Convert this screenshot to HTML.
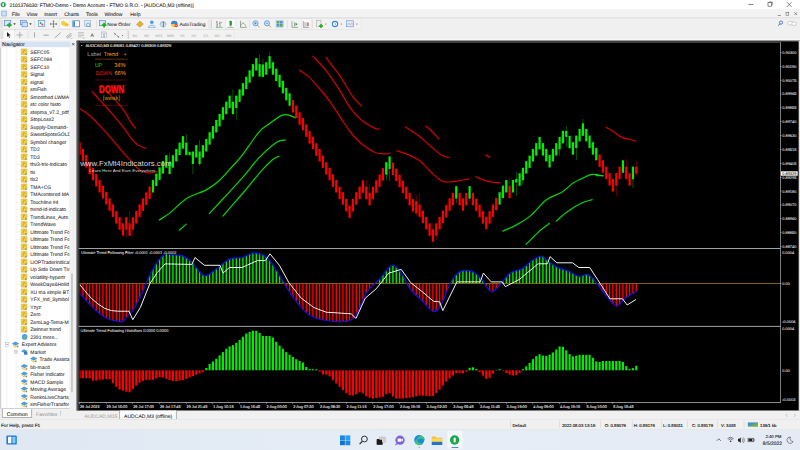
<!DOCTYPE html>
<html><head><meta charset="utf-8"><title>MT4</title><style>html,body{margin:0;padding:0;width:800px;height:450px;overflow:hidden;background:#f0f0f0}</style></head><body>
<svg width="800" height="450" viewBox="0 0 800 450" style="display:block">
<rect x="0" y="0" width="800" height="450" fill="#f0f0f0"/>
<rect x="0" y="0" width="800" height="9.4" fill="#ffffff"/>
<circle cx="3.2" cy="4.6" r="2.6" fill="#2aa05a"/><rect x="2.4" y="2.9" width="1.6" height="3.4" rx="0.8" fill="#fff"/>
<text x="9.49" y="6.6" font-size="4.95" fill="#1a1a1a" text-anchor="start" font-weight="normal" style="font-family:'Liberation Sans', sans-serif" stroke="#1a1a1a" stroke-width="0.07" transform="skewX(0.05)" >2101376030: FTMO-Demo - Demo Account - FTMO S.R.O. - [AUDCAD,M3 (offline)]</text>
<rect x="748.5" y="4.3" width="5" height="0.6" fill="#333"/>
<rect x="768" y="2.6" width="3.6" height="3.6" fill="none" stroke="#333" stroke-width="0.55"/><path d="M769 2 h3.3 v3.3" fill="none" stroke="#333" stroke-width="0.5"/>
<path d="M787 2.2 L791.6 6.8 M791.6 2.2 L787 6.8" stroke="#333" stroke-width="0.6"/>
<rect x="0" y="9.4" width="800" height="7.6" fill="#f3f3f3"/>
<rect x="0" y="17" width="800" height="1.5" fill="#e4e4e4"/>
<rect x="1.8" y="11" width="4.4" height="5" fill="#cfe0f5" stroke="#5b8fd0" stroke-width="0.5"/>
<text x="11.74" y="15.6" font-size="5.05" fill="#222" text-anchor="start" font-weight="normal" style="font-family:'Liberation Sans', sans-serif" stroke="#222" stroke-width="0.07" transform="skewX(0.05)" >File</text>
<text x="26.49" y="15.6" font-size="5.05" fill="#222" text-anchor="start" font-weight="normal" style="font-family:'Liberation Sans', sans-serif" stroke="#222" stroke-width="0.07" transform="skewX(0.05)" >View</text>
<text x="44.19" y="15.6" font-size="5.05" fill="#222" text-anchor="start" font-weight="normal" style="font-family:'Liberation Sans', sans-serif" stroke="#222" stroke-width="0.07" transform="skewX(0.05)" >Insert</text>
<text x="64.19" y="15.6" font-size="5.05" fill="#222" text-anchor="start" font-weight="normal" style="font-family:'Liberation Sans', sans-serif" stroke="#222" stroke-width="0.07" transform="skewX(0.05)" >Charts</text>
<text x="85.99" y="15.6" font-size="5.05" fill="#222" text-anchor="start" font-weight="normal" style="font-family:'Liberation Sans', sans-serif" stroke="#222" stroke-width="0.07" transform="skewX(0.05)" >Tools</text>
<text x="104.39" y="15.6" font-size="5.05" fill="#222" text-anchor="start" font-weight="normal" style="font-family:'Liberation Sans', sans-serif" stroke="#222" stroke-width="0.07" transform="skewX(0.05)" >Window</text>
<text x="130.19" y="15.6" font-size="5.05" fill="#222" text-anchor="start" font-weight="normal" style="font-family:'Liberation Sans', sans-serif" stroke="#222" stroke-width="0.07" transform="skewX(0.05)" >Help</text>
<rect x="777.8" y="15" width="3" height="0.5" fill="#333"/>
<rect x="786" y="12.4" width="2.8" height="2.8" fill="none" stroke="#444" stroke-width="0.45"/>
<path d="M794.3 12.3 L797.1 15.1 M797.1 12.3 L794.3 15.1" stroke="#333" stroke-width="0.5"/>
<rect x="0.5" y="18.6" width="208.2" height="10.599999999999998" fill="#f2f2f2" stroke="#dadada" stroke-width="0.4"/>
<rect x="210" y="18.6" width="24.5" height="10.599999999999998" fill="#f2f2f2" stroke="#dadada" stroke-width="0.4"/>
<rect x="211" y="18.6" width="150" height="10.599999999999998" fill="#f2f2f2" stroke="#dadada" stroke-width="0.4"/>
<rect x="0.5" y="29.8" width="126.5" height="9.999999999999996" fill="#f2f2f2" stroke="#dadada" stroke-width="0.4"/>
<rect x="127.5" y="29.8" width="106.5" height="9.999999999999996" fill="#f2f2f2" stroke="#dadada" stroke-width="0.4"/>
<rect x="1.6" y="20" width="0.8" height="8" fill="#c8c8c8"/>
<rect x="211.2" y="20" width="0.8" height="8" fill="#c8c8c8"/>
<rect x="1.6" y="31" width="0.8" height="8" fill="#c8c8c8"/>
<rect x="128.3" y="31" width="0.8" height="8" fill="#c8c8c8"/>
<rect x="34.5" y="20" width="0.5" height="8" fill="#cfcfcf"/>
<rect x="96" y="20" width="0.5" height="8" fill="#cfcfcf"/>
<rect x="249.6" y="20" width="0.5" height="8" fill="#cfcfcf"/>
<rect x="287" y="20" width="0.5" height="8" fill="#cfcfcf"/>
<rect x="312" y="20" width="0.5" height="8" fill="#cfcfcf"/>
<rect x="27.7" y="31" width="0.5" height="8" fill="#cfcfcf"/>
<rect x="4.6" y="20.6" width="6.2" height="5.2" fill="#d9e8f8" stroke="#3f7fcf" stroke-width="0.6"/>
<path d="M9.3 22.8 v4.6 M7.0 25.1 h4.6" stroke="#18b018" stroke-width="1.6"/>
<path d="M13.6 23.6 h1.8 l-0.9 1.2 z" fill="#222" stroke="#222" stroke-width="0.3"/>
<rect x="20.6" y="20.4" width="5.6" height="4.4" fill="#d9e8f8" stroke="#3f7fcf" stroke-width="0.6"/><rect x="22" y="22.2" width="5.6" height="4.6" fill="#d0e2f6" stroke="#3f7fcf" stroke-width="0.6"/>
<path d="M29.6 23.6 h1.8 l-0.9 1.2 z" fill="#222" stroke="#222" stroke-width="0.3"/>
<rect x="38.4" y="20.6" width="6.4" height="6" fill="#e8f1fb" stroke="#4a8ad6" stroke-width="0.6"/><circle cx="40.6" cy="23" r="0.9" fill="#2aa02a"/><circle cx="42.4" cy="24.6" r="1" fill="#e04a2a"/>
<path d="M53.5 20.6 v6.8 M50.1 24 h6.8" stroke="#555" stroke-width="0.6"/><path d="M53.5 20.4 l-1 1.2 h2 z M53.5 27.6 l-1 -1.2 h2 z M49.9 24 l1.2 -1 v2 z M57.1 24 l-1.2 -1 v2 z" fill="#555"/>
<rect x="59.8" y="18.9" width="9.8" height="10" fill="#fbfbfb" stroke="#d6d6d6" stroke-width="0.35"/>
<path d="M61 21.4 l3 -0.6 l2.2 2.2 l-1.2 3 l-3.6 -1 z" fill="#f2cf45"/><path d="M64.3 23.4 l1.6 0.3 l0.8 -1.4 l0.8 1.4 l1.6 0.3 l-1.1 1.2 l0.3 1.6 l-1.6 -0.7 l-1.5 0.8 l0.2 -1.6 z" fill="#f0c020"/>
<rect x="72.8" y="20.8" width="6.6" height="6" fill="#ffffff" stroke="#3a7bd0" stroke-width="0.7"/><rect x="73.3" y="21.3" width="1.6" height="5" fill="#3a7bd0"/>
<rect x="84.8" y="20.6" width="5.8" height="6" fill="#e6eef8" stroke="#7a9cc8" stroke-width="0.5"/><circle cx="88.2" cy="24.8" r="1.8" fill="none" stroke="#3a7bd0" stroke-width="0.6"/><path d="M89.4 26 l1.8 1.6" stroke="#d8a020" stroke-width="0.8"/>
<rect x="99.4" y="20.6" width="6.2" height="5.2" fill="#d9e8f8" stroke="#3f7fcf" stroke-width="0.6"/>
<path d="M104.10000000000001 22.8 v4.6 M101.80000000000001 25.1 h4.6" stroke="#18b018" stroke-width="1.6"/>
<text x="107.28" y="25.8" font-size="4.8" fill="#222" text-anchor="start" font-weight="normal" style="font-family:'Liberation Sans', sans-serif" stroke="#222" stroke-width="0.07" transform="skewX(0.05)" >New Order</text>
<path d="M136.5 24.5 l3.5 -3.5 l3.4 3 l-3.4 3.2 z" fill="#e8b030" stroke="#a8781a" stroke-width="0.4"/>
<circle cx="151.8" cy="22.3" r="1.8" fill="#4a9ae6"/><path d="M148.3 27.4 c0 -3 7 -3 7 0 z" fill="#4a9ae6" stroke="#2a6ab6" stroke-width="0.3"/><ellipse cx="151.8" cy="26.6" rx="3.3" ry="1" fill="#e8eef6" stroke="#9ab" stroke-width="0.3"/>
<path d="M160 24.6 a3 3 0 0 1 6 0" fill="none" stroke="#88a8c8" stroke-width="0.7"/><circle cx="163" cy="24.4" r="2.6" fill="#cfe3f0" stroke="#6a9ac0" stroke-width="0.4"/><path d="M163.4 21.6 v5.6" stroke="#2a9a3a" stroke-width="0.9"/>
<circle cx="174.2" cy="24" r="3.3" fill="#f6c84a"/><path d="M170.9 24 a3.3 3.3 0 0 1 6.6 0 z" fill="#3a8ad0"/><circle cx="176.2" cy="25.6" r="1.7" fill="#e03030"/><rect x="175.3" y="25.3" width="1.8" height="0.6" fill="#fff"/>
<text x="179.38" y="25.8" font-size="4.8" fill="#222" text-anchor="start" font-weight="normal" style="font-family:'Liberation Sans', sans-serif" stroke="#222" stroke-width="0.07" transform="skewX(0.05)" >AutoTrading</text>
<path d="M217 21 v6.5 M216 22 h1 M217 25 h1 M220 21.5 v5.5 M219 23.5 h1 M221 22.5 h1" stroke="#444" stroke-width="0.5"/><path d="M215.8 27.4 h7" stroke="#2a9a2a" stroke-width="0.5"/>
<rect x="225.6" y="18.9" width="10" height="10" fill="#fbfbfb" stroke="#d6d6d6" stroke-width="0.35"/>
<rect x="229.8" y="21.2" width="2" height="4" fill="#2ab02a" stroke="#137a13" stroke-width="0.3"/><path d="M230.8 20.2 v6.8" stroke="#137a13" stroke-width="0.4"/><path d="M227 27.4 h7" stroke="#555" stroke-width="0.4"/>
<path d="M240.5 20.8 v6.6 h6.2" fill="none" stroke="#555" stroke-width="0.5"/><path d="M241 25.5 c1.5 -4 3 -3 5 1" fill="none" stroke="#2a9a2a" stroke-width="0.6"/>
<circle cx="255.5" cy="23.3" r="2.6" fill="#cfe6fb" stroke="#3a86d6" stroke-width="0.7"/><path d="M257.3 25.1 l2.2 2.2" stroke="#d8a020" stroke-width="1"/><path d="M254.2 23.3 h2.6" stroke="#2a70c0" stroke-width="0.6"/>
<path d="M255.5 22 v2.6" stroke="#2a70c0" stroke-width="0.6"/>
<circle cx="267" cy="23.3" r="2.6" fill="#cfe6fb" stroke="#3a86d6" stroke-width="0.7"/><path d="M268.8 25.1 l2.2 2.2" stroke="#d8a020" stroke-width="1"/><path d="M265.7 23.3 h2.6" stroke="#2a70c0" stroke-width="0.6"/>
<rect x="276" y="20.4" width="7.2" height="6.9" fill="#fff" stroke="#8aaed8" stroke-width="0.4"/><rect x="276.5" y="20.9" width="3" height="2.8" fill="#5aaa5a"/><rect x="279.8" y="20.9" width="3" height="2.8" fill="#5a90d8"/><rect x="276.5" y="24" width="3" height="2.8" fill="#5a90d8"/><rect x="279.8" y="24" width="3" height="2.8" fill="#5aaa5a"/>
<path d="M292 21 v6.4 h6 M294.5 22.5 v4" fill="none" stroke="#555" stroke-width="0.5"/><path d="M295.5 22.6 l2.2 1.6 l-2.2 1.6 z" fill="#2aa02a"/>
<rect x="301.4" y="18.9" width="9.8" height="10" fill="#fbfbfb" stroke="#d6d6d6" stroke-width="0.35"/>
<path d="M303.3 21 v6.4 h6 M305 22 v4.5 M307 22.5 v4" fill="none" stroke="#555" stroke-width="0.5"/><path d="M308 22.5 v3.5" stroke="#e02020" stroke-width="1"/>
<rect x="316.2" y="20.4" width="4.8" height="6" fill="#eee" stroke="#888" stroke-width="0.4"/><path d="M321 24 v4 M319 26 h4" stroke="#18b018" stroke-width="1.5"/><path d="M325.2 23.8 l1.4 0 l-0.7 0.9 z" fill="#333"/>
<circle cx="335" cy="24" r="3.2" fill="#3a86d6"/><circle cx="335" cy="24" r="2.1" fill="#fff"/><path d="M335 22.6 v1.4 l1 0.7" stroke="#333" stroke-width="0.4" fill="none"/><path d="M340.6 23.8 l1.4 0 l-0.7 0.9 z" fill="#333"/>
<rect x="346.6" y="20.8" width="7" height="6" fill="#dfeafa" stroke="#4a80c8" stroke-width="0.5"/><path d="M347.4 24.5 l1.5 -1 l1.5 1 l1.5 -1 l1.5 1" stroke="#e04040" stroke-width="0.4" fill="none"/><path d="M356.2 23.8 l1.4 0 l-0.7 0.9 z" fill="#333"/>
<circle cx="781" cy="22.6" r="1.6" fill="none" stroke="#2a6ad6" stroke-width="0.8"/><path d="M779.9 23.8 l-1.6 1.8" stroke="#2a6ad6" stroke-width="1"/>
<ellipse cx="790.5" cy="23.2" rx="2.6" ry="1.9" fill="#fff" stroke="#999" stroke-width="0.45"/><ellipse cx="794" cy="23.8" rx="2.4" ry="1.7" fill="#fff" stroke="#999" stroke-width="0.45"/>
<rect x="3.7" y="30" width="10.5" height="9.6" fill="#fbfbfb" stroke="#dedede" stroke-width="0.3"/>
<path d="M7 32 l0 5 l1.2 -1.2 l1 2 l0.8 -0.4 l-1 -2 l1.7 0 z" fill="#222"/>
<path d="M19.8 31.8 v6.4 M16.6 35 h6.4" stroke="#777" stroke-width="0.5"/>
<path d="M34.5 32.4 v5" stroke="#666" stroke-width="0.55"/>
<path d="M43.5 35.2 h5.2" stroke="#666" stroke-width="0.55"/>
<path d="M54.7 38 l6 -5.4" stroke="#666" stroke-width="0.55"/>
<path d="M66 37 l5 -4 M66.6 38 l5 -4 M67.6 38.6 l4 -3" stroke="#888" stroke-width="0.55"/><text x="71" y="39" font-size="2.5" fill="#444" style="font-family:Liberation Sans">F</text>
<path d="M78 32.5 h6 M78 34 h6 M78 35.5 h6 M78 37 h4" stroke="#999" stroke-width="0.45"/><path d="M82.5 37.5 l1.2 1.2 l1.2 -1.2" fill="none" stroke="#666" stroke-width="0.4"/>
<text x="90.57" y="37.2" font-size="5" fill="#444" text-anchor="start" font-weight="normal" style="font-family:'Liberation Sans', sans-serif" stroke="#444" stroke-width="0.07" transform="skewX(0.05)" >A</text>
<rect x="101.6" y="32" width="5.2" height="5.6" fill="#f4f4f4" stroke="#888" stroke-width="0.4"/><text x="102.57" y="37" font-size="4.8" fill="#444" text-anchor="start" font-weight="normal" style="font-family:'Liberation Sans', sans-serif" stroke="#444" stroke-width="0.07" transform="skewX(0.05)" >T</text>
<path d="M113.8 33 l2 1 l-1 1.2 M116.6 35.6 l2.4 1.2 l-1 1" fill="none" stroke="#444" stroke-width="0.6"/><path d="M121.8 35 l1.5 0 l-0.75 0.9 z" fill="#333"/>
<text x="132.47" y="36.6" font-size="3.6" fill="#b4b4b4" text-anchor="start" font-weight="normal" style="font-family:'Liberation Sans', sans-serif" stroke="#b4b4b4" stroke-width="0.07" transform="skewX(0.05)" >M1</text>
<text x="144.27" y="36.6" font-size="3.6" fill="#b4b4b4" text-anchor="start" font-weight="normal" style="font-family:'Liberation Sans', sans-serif" stroke="#b4b4b4" stroke-width="0.07" transform="skewX(0.05)" >M5</text>
<text x="155.37" y="36.6" font-size="3.6" fill="#b4b4b4" text-anchor="start" font-weight="normal" style="font-family:'Liberation Sans', sans-serif" stroke="#b4b4b4" stroke-width="0.07" transform="skewX(0.05)" >M15</text>
<text x="166.97" y="36.6" font-size="3.6" fill="#b4b4b4" text-anchor="start" font-weight="normal" style="font-family:'Liberation Sans', sans-serif" stroke="#b4b4b4" stroke-width="0.07" transform="skewX(0.05)" >M30</text>
<text x="180.17" y="36.6" font-size="3.6" fill="#b4b4b4" text-anchor="start" font-weight="normal" style="font-family:'Liberation Sans', sans-serif" stroke="#b4b4b4" stroke-width="0.07" transform="skewX(0.05)" >H1</text>
<text x="191.47" y="36.6" font-size="3.6" fill="#b4b4b4" text-anchor="start" font-weight="normal" style="font-family:'Liberation Sans', sans-serif" stroke="#b4b4b4" stroke-width="0.07" transform="skewX(0.05)" >H4</text>
<text x="203.57" y="36.6" font-size="3.6" fill="#b4b4b4" text-anchor="start" font-weight="normal" style="font-family:'Liberation Sans', sans-serif" stroke="#b4b4b4" stroke-width="0.07" transform="skewX(0.05)" >D1</text>
<text x="214.57" y="36.6" font-size="3.6" fill="#b4b4b4" text-anchor="start" font-weight="normal" style="font-family:'Liberation Sans', sans-serif" stroke="#b4b4b4" stroke-width="0.07" transform="skewX(0.05)" >W1</text>
<text x="225.77" y="36.6" font-size="3.6" fill="#b4b4b4" text-anchor="start" font-weight="normal" style="font-family:'Liberation Sans', sans-serif" stroke="#b4b4b4" stroke-width="0.07" transform="skewX(0.05)" >MN</text>
<rect x="0" y="40.2" width="78" height="370" fill="#f0f0f0"/>
<rect x="0.8" y="41.6" width="69.6" height="5.4" fill="#d5e3f3"/>
<text x="2.06" y="46.1" font-size="5.3" fill="#1a2a3a" text-anchor="start" font-weight="normal" style="font-family:'Liberation Sans', sans-serif" stroke="#1a2a3a" stroke-width="0.07" transform="skewX(0.05)" >Navigator</text>
<path d="M72.2 43 l2.2 2.4 M74.4 43 l-2.2 2.4" stroke="#222" stroke-width="0.6"/>
<rect x="1" y="47.5" width="68.4" height="361" fill="#ffffff"/>
<rect x="69.4" y="47.5" width="7" height="361" fill="#f0f0f0"/>
<rect x="71.1" y="273.3" width="1.7" height="119" fill="#c4c4c4" rx="0.5"/>
<rect x="0.6" y="47.5" width="0.5" height="361" fill="#a0a0a0"/>
<clipPath id="navclip"><rect x="1" y="47.5" width="68.4" height="361"/></clipPath>
<g clip-path="url(#navclip)">
<path d="M6.9 47.5 V408" stroke="#c8c8c8" stroke-width="0.4" stroke-dasharray="0.5 0.5"/>
<path d="M16.1 47.5 V340" stroke="#c8c8c8" stroke-width="0.4" stroke-dasharray="0.5 0.5"/>
<path d="M16.1 355 V408" stroke="#c8c8c8" stroke-width="0.4" stroke-dasharray="0.5 0.5"/>
<path d="M25 355 V359.4 H30" stroke="#c8c8c8" stroke-width="0.4" fill="none" stroke-dasharray="0.5 0.5"/>
<path d="M16.4 51.9 H20.5" stroke="#c8c8c8" stroke-width="0.4" stroke-dasharray="0.5 0.5"/>
<rect x="21.2" y="48.9" width="5.8" height="5.8" fill="#f3d24a" stroke="#caa22a" stroke-width="0.45" rx="0.6"/><path d="M22.8 53.699999999999996 l1.2 -4 l1.6 1.8" fill="none" stroke="#8a6a10" stroke-width="0.4"/><circle cx="25.799999999999997" cy="53.9" r="1" fill="#9a9a9a"/>
<text x="30.25" y="53.699999999999996" font-size="5.0" fill="#1a1a1a" text-anchor="start" font-weight="normal" style="font-family:'Liberation Sans', sans-serif" stroke="#1a1a1a" stroke-width="0.04" transform="skewX(0.05)" >SEFC05</text>
<path d="M16.4 59.4 H20.5" stroke="#c8c8c8" stroke-width="0.4" stroke-dasharray="0.5 0.5"/>
<rect x="21.2" y="56.4" width="5.8" height="5.8" fill="#f3d24a" stroke="#caa22a" stroke-width="0.45" rx="0.6"/><path d="M22.8 61.199999999999996 l1.2 -4 l1.6 1.8" fill="none" stroke="#8a6a10" stroke-width="0.4"/><circle cx="25.799999999999997" cy="61.4" r="1" fill="#9a9a9a"/>
<text x="30.25" y="61.199999999999996" font-size="5.0" fill="#1a1a1a" text-anchor="start" font-weight="normal" style="font-family:'Liberation Sans', sans-serif" stroke="#1a1a1a" stroke-width="0.04" transform="skewX(0.05)" >SEFC084</text>
<path d="M16.4 66.9 H20.5" stroke="#c8c8c8" stroke-width="0.4" stroke-dasharray="0.5 0.5"/>
<rect x="21.2" y="63.900000000000006" width="5.8" height="5.8" fill="#f3d24a" stroke="#caa22a" stroke-width="0.45" rx="0.6"/><path d="M22.8 68.7 l1.2 -4 l1.6 1.8" fill="none" stroke="#8a6a10" stroke-width="0.4"/><circle cx="25.799999999999997" cy="68.9" r="1" fill="#9a9a9a"/>
<text x="30.24" y="68.7" font-size="5.0" fill="#1a1a1a" text-anchor="start" font-weight="normal" style="font-family:'Liberation Sans', sans-serif" stroke="#1a1a1a" stroke-width="0.04" transform="skewX(0.05)" >SEFC10</text>
<path d="M16.4 74.4 H20.5" stroke="#c8c8c8" stroke-width="0.4" stroke-dasharray="0.5 0.5"/>
<rect x="21.2" y="71.4" width="5.8" height="5.8" fill="#f3d24a" stroke="#caa22a" stroke-width="0.45" rx="0.6"/><path d="M22.8 76.2 l1.2 -4 l1.6 1.8" fill="none" stroke="#8a6a10" stroke-width="0.4"/><circle cx="25.799999999999997" cy="76.4" r="1" fill="#9a9a9a"/>
<text x="30.23" y="76.2" font-size="5.0" fill="#1a1a1a" text-anchor="start" font-weight="normal" style="font-family:'Liberation Sans', sans-serif" stroke="#1a1a1a" stroke-width="0.04" transform="skewX(0.05)" >Signal</text>
<path d="M16.4 81.9 H20.5" stroke="#c8c8c8" stroke-width="0.4" stroke-dasharray="0.5 0.5"/>
<rect x="21.2" y="78.9" width="5.8" height="5.8" fill="#f3d24a" stroke="#caa22a" stroke-width="0.45" rx="0.6"/><path d="M22.8 83.7 l1.2 -4 l1.6 1.8" fill="none" stroke="#8a6a10" stroke-width="0.4"/><circle cx="25.799999999999997" cy="83.9" r="1" fill="#9a9a9a"/>
<text x="30.23" y="83.7" font-size="5.0" fill="#1a1a1a" text-anchor="start" font-weight="normal" style="font-family:'Liberation Sans', sans-serif" stroke="#1a1a1a" stroke-width="0.04" transform="skewX(0.05)" >signal</text>
<path d="M16.4 89.4 H20.5" stroke="#c8c8c8" stroke-width="0.4" stroke-dasharray="0.5 0.5"/>
<rect x="21.2" y="86.4" width="5.8" height="5.8" fill="#f3d24a" stroke="#caa22a" stroke-width="0.45" rx="0.6"/><path d="M22.8 91.2 l1.2 -4 l1.6 1.8" fill="none" stroke="#8a6a10" stroke-width="0.4"/><circle cx="25.799999999999997" cy="91.4" r="1" fill="#9a9a9a"/>
<text x="30.22" y="91.2" font-size="5.0" fill="#1a1a1a" text-anchor="start" font-weight="normal" style="font-family:'Liberation Sans', sans-serif" stroke="#1a1a1a" stroke-width="0.04" transform="skewX(0.05)" >smFish</text>
<path d="M16.4 96.9 H20.5" stroke="#c8c8c8" stroke-width="0.4" stroke-dasharray="0.5 0.5"/>
<rect x="21.2" y="93.9" width="5.8" height="5.8" fill="#f3d24a" stroke="#caa22a" stroke-width="0.45" rx="0.6"/><path d="M22.8 98.7 l1.2 -4 l1.6 1.8" fill="none" stroke="#8a6a10" stroke-width="0.4"/><circle cx="25.799999999999997" cy="98.9" r="1" fill="#9a9a9a"/>
<text x="30.21" y="98.7" font-size="5.0" fill="#1a1a1a" text-anchor="start" font-weight="normal" style="font-family:'Liberation Sans', sans-serif" stroke="#1a1a1a" stroke-width="0.04" transform="skewX(0.05)" >Smoothed LWMA</text>
<path d="M16.4 104.4 H20.5" stroke="#c8c8c8" stroke-width="0.4" stroke-dasharray="0.5 0.5"/>
<rect x="21.2" y="101.4" width="5.8" height="5.8" fill="#f3d24a" stroke="#caa22a" stroke-width="0.45" rx="0.6"/><path d="M22.8 106.2 l1.2 -4 l1.6 1.8" fill="none" stroke="#8a6a10" stroke-width="0.4"/><circle cx="25.799999999999997" cy="106.4" r="1" fill="#9a9a9a"/>
<text x="30.21" y="106.2" font-size="5.0" fill="#1a1a1a" text-anchor="start" font-weight="normal" style="font-family:'Liberation Sans', sans-serif" stroke="#1a1a1a" stroke-width="0.04" transform="skewX(0.05)" >stc color histo</text>
<path d="M16.4 111.9 H20.5" stroke="#c8c8c8" stroke-width="0.4" stroke-dasharray="0.5 0.5"/>
<rect x="21.2" y="108.9" width="5.8" height="5.8" fill="#f3d24a" stroke="#caa22a" stroke-width="0.45" rx="0.6"/><path d="M22.8 113.7 l1.2 -4 l1.6 1.8" fill="none" stroke="#8a6a10" stroke-width="0.4"/><circle cx="25.799999999999997" cy="113.9" r="1" fill="#9a9a9a"/>
<text x="30.20" y="113.7" font-size="5.0" fill="#1a1a1a" text-anchor="start" font-weight="normal" style="font-family:'Liberation Sans', sans-serif" stroke="#1a1a1a" stroke-width="0.04" transform="skewX(0.05)" >stepma_v7.2_pdf_</text>
<path d="M16.4 119.4 H20.5" stroke="#c8c8c8" stroke-width="0.4" stroke-dasharray="0.5 0.5"/>
<rect x="21.2" y="116.4" width="5.8" height="5.8" fill="#f3d24a" stroke="#caa22a" stroke-width="0.45" rx="0.6"/><path d="M22.8 121.2 l1.2 -4 l1.6 1.8" fill="none" stroke="#8a6a10" stroke-width="0.4"/><circle cx="25.799999999999997" cy="121.4" r="1" fill="#9a9a9a"/>
<text x="30.19" y="121.2" font-size="5.0" fill="#1a1a1a" text-anchor="start" font-weight="normal" style="font-family:'Liberation Sans', sans-serif" stroke="#1a1a1a" stroke-width="0.04" transform="skewX(0.05)" >StopLoss2</text>
<path d="M16.4 126.9 H20.5" stroke="#c8c8c8" stroke-width="0.4" stroke-dasharray="0.5 0.5"/>
<rect x="21.2" y="123.9" width="5.8" height="5.8" fill="#f3d24a" stroke="#caa22a" stroke-width="0.45" rx="0.6"/><path d="M22.8 128.70000000000002 l1.2 -4 l1.6 1.8" fill="none" stroke="#8a6a10" stroke-width="0.4"/><circle cx="25.799999999999997" cy="128.9" r="1" fill="#9a9a9a"/>
<text x="30.19" y="128.70000000000002" font-size="5.0" fill="#1a1a1a" text-anchor="start" font-weight="normal" style="font-family:'Liberation Sans', sans-serif" stroke="#1a1a1a" stroke-width="0.04" transform="skewX(0.05)" >Supply-Demand-</text>
<path d="M16.4 134.4 H20.5" stroke="#c8c8c8" stroke-width="0.4" stroke-dasharray="0.5 0.5"/>
<rect x="21.2" y="131.4" width="5.8" height="5.8" fill="#f3d24a" stroke="#caa22a" stroke-width="0.45" rx="0.6"/><path d="M22.8 136.20000000000002 l1.2 -4 l1.6 1.8" fill="none" stroke="#8a6a10" stroke-width="0.4"/><circle cx="25.799999999999997" cy="136.4" r="1" fill="#9a9a9a"/>
<text x="30.18" y="136.20000000000002" font-size="5.0" fill="#1a1a1a" text-anchor="start" font-weight="normal" style="font-family:'Liberation Sans', sans-serif" stroke="#1a1a1a" stroke-width="0.04" transform="skewX(0.05)" >SweetSpotsGOLD</text>
<path d="M16.4 141.9 H20.5" stroke="#c8c8c8" stroke-width="0.4" stroke-dasharray="0.5 0.5"/>
<rect x="21.2" y="138.9" width="5.8" height="5.8" fill="#f3d24a" stroke="#caa22a" stroke-width="0.45" rx="0.6"/><path d="M22.8 143.70000000000002 l1.2 -4 l1.6 1.8" fill="none" stroke="#8a6a10" stroke-width="0.4"/><circle cx="25.799999999999997" cy="143.9" r="1" fill="#9a9a9a"/>
<text x="30.17" y="143.70000000000002" font-size="5.0" fill="#1a1a1a" text-anchor="start" font-weight="normal" style="font-family:'Liberation Sans', sans-serif" stroke="#1a1a1a" stroke-width="0.04" transform="skewX(0.05)" >Symbol changer</text>
<path d="M16.4 149.4 H20.5" stroke="#c8c8c8" stroke-width="0.4" stroke-dasharray="0.5 0.5"/>
<rect x="21.2" y="146.4" width="5.8" height="5.8" fill="#f3d24a" stroke="#caa22a" stroke-width="0.45" rx="0.6"/><path d="M22.8 151.20000000000002 l1.2 -4 l1.6 1.8" fill="none" stroke="#8a6a10" stroke-width="0.4"/><circle cx="25.799999999999997" cy="151.4" r="1" fill="#9a9a9a"/>
<text x="30.17" y="151.20000000000002" font-size="5.0" fill="#1a1a1a" text-anchor="start" font-weight="normal" style="font-family:'Liberation Sans', sans-serif" stroke="#1a1a1a" stroke-width="0.04" transform="skewX(0.05)" >TD2</text>
<path d="M16.4 156.9 H20.5" stroke="#c8c8c8" stroke-width="0.4" stroke-dasharray="0.5 0.5"/>
<rect x="21.2" y="153.9" width="5.8" height="5.8" fill="#f3d24a" stroke="#caa22a" stroke-width="0.45" rx="0.6"/><path d="M22.8 158.70000000000002 l1.2 -4 l1.6 1.8" fill="none" stroke="#8a6a10" stroke-width="0.4"/><circle cx="25.799999999999997" cy="158.9" r="1" fill="#9a9a9a"/>
<text x="30.16" y="158.70000000000002" font-size="5.0" fill="#1a1a1a" text-anchor="start" font-weight="normal" style="font-family:'Liberation Sans', sans-serif" stroke="#1a1a1a" stroke-width="0.04" transform="skewX(0.05)" >TD3</text>
<path d="M16.4 164.4 H20.5" stroke="#c8c8c8" stroke-width="0.4" stroke-dasharray="0.5 0.5"/>
<rect x="21.2" y="161.4" width="5.8" height="5.8" fill="#f3d24a" stroke="#caa22a" stroke-width="0.45" rx="0.6"/><path d="M22.8 166.20000000000002 l1.2 -4 l1.6 1.8" fill="none" stroke="#8a6a10" stroke-width="0.4"/><circle cx="25.799999999999997" cy="166.4" r="1" fill="#9a9a9a"/>
<text x="30.15" y="166.20000000000002" font-size="5.0" fill="#1a1a1a" text-anchor="start" font-weight="normal" style="font-family:'Liberation Sans', sans-serif" stroke="#1a1a1a" stroke-width="0.04" transform="skewX(0.05)" >thv3-trix-indicato</text>
<path d="M16.4 171.9 H20.5" stroke="#c8c8c8" stroke-width="0.4" stroke-dasharray="0.5 0.5"/>
<rect x="21.2" y="168.9" width="5.8" height="5.8" fill="#f3d24a" stroke="#caa22a" stroke-width="0.45" rx="0.6"/><path d="M22.8 173.70000000000002 l1.2 -4 l1.6 1.8" fill="none" stroke="#8a6a10" stroke-width="0.4"/><circle cx="25.799999999999997" cy="173.9" r="1" fill="#9a9a9a"/>
<text x="30.15" y="173.70000000000002" font-size="5.0" fill="#1a1a1a" text-anchor="start" font-weight="normal" style="font-family:'Liberation Sans', sans-serif" stroke="#1a1a1a" stroke-width="0.04" transform="skewX(0.05)" >tix</text>
<path d="M16.4 179.4 H20.5" stroke="#c8c8c8" stroke-width="0.4" stroke-dasharray="0.5 0.5"/>
<rect x="21.2" y="176.4" width="5.8" height="5.8" fill="#f3d24a" stroke="#caa22a" stroke-width="0.45" rx="0.6"/><path d="M22.8 181.20000000000002 l1.2 -4 l1.6 1.8" fill="none" stroke="#8a6a10" stroke-width="0.4"/><circle cx="25.799999999999997" cy="181.4" r="1" fill="#9a9a9a"/>
<text x="30.14" y="181.20000000000002" font-size="5.0" fill="#1a1a1a" text-anchor="start" font-weight="normal" style="font-family:'Liberation Sans', sans-serif" stroke="#1a1a1a" stroke-width="0.04" transform="skewX(0.05)" >tix2</text>
<path d="M16.4 186.9 H20.5" stroke="#c8c8c8" stroke-width="0.4" stroke-dasharray="0.5 0.5"/>
<rect x="21.2" y="183.9" width="5.8" height="5.8" fill="#f3d24a" stroke="#caa22a" stroke-width="0.45" rx="0.6"/><path d="M22.8 188.70000000000002 l1.2 -4 l1.6 1.8" fill="none" stroke="#8a6a10" stroke-width="0.4"/><circle cx="25.799999999999997" cy="188.9" r="1" fill="#9a9a9a"/>
<text x="30.14" y="188.70000000000002" font-size="5.0" fill="#1a1a1a" text-anchor="start" font-weight="normal" style="font-family:'Liberation Sans', sans-serif" stroke="#1a1a1a" stroke-width="0.04" transform="skewX(0.05)" >TMA+CG</text>
<path d="M16.4 194.4 H20.5" stroke="#c8c8c8" stroke-width="0.4" stroke-dasharray="0.5 0.5"/>
<rect x="21.2" y="191.4" width="5.8" height="5.8" fill="#f3d24a" stroke="#caa22a" stroke-width="0.45" rx="0.6"/><path d="M22.8 196.20000000000002 l1.2 -4 l1.6 1.8" fill="none" stroke="#8a6a10" stroke-width="0.4"/><circle cx="25.799999999999997" cy="196.4" r="1" fill="#9a9a9a"/>
<text x="30.13" y="196.20000000000002" font-size="5.0" fill="#1a1a1a" text-anchor="start" font-weight="normal" style="font-family:'Liberation Sans', sans-serif" stroke="#1a1a1a" stroke-width="0.04" transform="skewX(0.05)" >TMAcentered MA</text>
<path d="M16.4 201.9 H20.5" stroke="#c8c8c8" stroke-width="0.4" stroke-dasharray="0.5 0.5"/>
<rect x="21.2" y="198.9" width="5.8" height="5.8" fill="#f3d24a" stroke="#caa22a" stroke-width="0.45" rx="0.6"/><path d="M22.8 203.70000000000002 l1.2 -4 l1.6 1.8" fill="none" stroke="#8a6a10" stroke-width="0.4"/><circle cx="25.799999999999997" cy="203.9" r="1" fill="#9a9a9a"/>
<text x="30.12" y="203.70000000000002" font-size="5.0" fill="#1a1a1a" text-anchor="start" font-weight="normal" style="font-family:'Liberation Sans', sans-serif" stroke="#1a1a1a" stroke-width="0.04" transform="skewX(0.05)" >Touchline #4</text>
<path d="M16.4 209.4 H20.5" stroke="#c8c8c8" stroke-width="0.4" stroke-dasharray="0.5 0.5"/>
<rect x="21.2" y="206.4" width="5.8" height="5.8" fill="#f3d24a" stroke="#caa22a" stroke-width="0.45" rx="0.6"/><path d="M22.8 211.20000000000002 l1.2 -4 l1.6 1.8" fill="none" stroke="#8a6a10" stroke-width="0.4"/><circle cx="25.799999999999997" cy="211.4" r="1" fill="#9a9a9a"/>
<text x="30.12" y="211.20000000000002" font-size="5.0" fill="#1a1a1a" text-anchor="start" font-weight="normal" style="font-family:'Liberation Sans', sans-serif" stroke="#1a1a1a" stroke-width="0.04" transform="skewX(0.05)" >trend-id-indicato</text>
<path d="M16.4 216.9 H20.5" stroke="#c8c8c8" stroke-width="0.4" stroke-dasharray="0.5 0.5"/>
<rect x="21.2" y="213.9" width="5.8" height="5.8" fill="#f3d24a" stroke="#caa22a" stroke-width="0.45" rx="0.6"/><path d="M22.8 218.70000000000002 l1.2 -4 l1.6 1.8" fill="none" stroke="#8a6a10" stroke-width="0.4"/><circle cx="25.799999999999997" cy="218.9" r="1" fill="#9a9a9a"/>
<text x="30.11" y="218.70000000000002" font-size="5.0" fill="#1a1a1a" text-anchor="start" font-weight="normal" style="font-family:'Liberation Sans', sans-serif" stroke="#1a1a1a" stroke-width="0.04" transform="skewX(0.05)" >TrendLines_Auto</text>
<path d="M16.4 224.4 H20.5" stroke="#c8c8c8" stroke-width="0.4" stroke-dasharray="0.5 0.5"/>
<rect x="21.2" y="221.4" width="5.8" height="5.8" fill="#f3d24a" stroke="#caa22a" stroke-width="0.45" rx="0.6"/><path d="M22.8 226.20000000000002 l1.2 -4 l1.6 1.8" fill="none" stroke="#8a6a10" stroke-width="0.4"/><circle cx="25.799999999999997" cy="226.4" r="1" fill="#9a9a9a"/>
<text x="30.10" y="226.20000000000002" font-size="5.0" fill="#1a1a1a" text-anchor="start" font-weight="normal" style="font-family:'Liberation Sans', sans-serif" stroke="#1a1a1a" stroke-width="0.04" transform="skewX(0.05)" >TrendWave</text>
<path d="M16.4 231.9 H20.5" stroke="#c8c8c8" stroke-width="0.4" stroke-dasharray="0.5 0.5"/>
<rect x="21.2" y="228.9" width="5.8" height="5.8" fill="#f3d24a" stroke="#caa22a" stroke-width="0.45" rx="0.6"/><path d="M22.8 233.70000000000002 l1.2 -4 l1.6 1.8" fill="none" stroke="#8a6a10" stroke-width="0.4"/><circle cx="25.799999999999997" cy="233.9" r="1" fill="#9a9a9a"/>
<text x="30.10" y="233.70000000000002" font-size="5.0" fill="#1a1a1a" text-anchor="start" font-weight="normal" style="font-family:'Liberation Sans', sans-serif" stroke="#1a1a1a" stroke-width="0.04" transform="skewX(0.05)" >Ultimate Trend Fo</text>
<path d="M16.4 239.4 H20.5" stroke="#c8c8c8" stroke-width="0.4" stroke-dasharray="0.5 0.5"/>
<rect x="21.2" y="236.4" width="5.8" height="5.8" fill="#f3d24a" stroke="#caa22a" stroke-width="0.45" rx="0.6"/><path d="M22.8 241.20000000000002 l1.2 -4 l1.6 1.8" fill="none" stroke="#8a6a10" stroke-width="0.4"/><circle cx="25.799999999999997" cy="241.4" r="1" fill="#9a9a9a"/>
<text x="30.09" y="241.20000000000002" font-size="5.0" fill="#1a1a1a" text-anchor="start" font-weight="normal" style="font-family:'Liberation Sans', sans-serif" stroke="#1a1a1a" stroke-width="0.04" transform="skewX(0.05)" >Ultimate Trend Fo</text>
<path d="M16.4 246.9 H20.5" stroke="#c8c8c8" stroke-width="0.4" stroke-dasharray="0.5 0.5"/>
<rect x="21.2" y="243.9" width="5.8" height="5.8" fill="#f3d24a" stroke="#caa22a" stroke-width="0.45" rx="0.6"/><path d="M22.8 248.70000000000002 l1.2 -4 l1.6 1.8" fill="none" stroke="#8a6a10" stroke-width="0.4"/><circle cx="25.799999999999997" cy="248.9" r="1" fill="#9a9a9a"/>
<text x="30.08" y="248.70000000000002" font-size="5.0" fill="#1a1a1a" text-anchor="start" font-weight="normal" style="font-family:'Liberation Sans', sans-serif" stroke="#1a1a1a" stroke-width="0.04" transform="skewX(0.05)" >Ultimate Trend Fo</text>
<path d="M16.4 254.4 H20.5" stroke="#c8c8c8" stroke-width="0.4" stroke-dasharray="0.5 0.5"/>
<rect x="21.2" y="251.4" width="5.8" height="5.8" fill="#f3d24a" stroke="#caa22a" stroke-width="0.45" rx="0.6"/><path d="M22.8 256.2 l1.2 -4 l1.6 1.8" fill="none" stroke="#8a6a10" stroke-width="0.4"/><circle cx="25.799999999999997" cy="256.4" r="1" fill="#9a9a9a"/>
<text x="30.08" y="256.2" font-size="5.0" fill="#1a1a1a" text-anchor="start" font-weight="normal" style="font-family:'Liberation Sans', sans-serif" stroke="#1a1a1a" stroke-width="0.04" transform="skewX(0.05)" >Ultimate Trend Fo</text>
<path d="M16.4 261.9 H20.5" stroke="#c8c8c8" stroke-width="0.4" stroke-dasharray="0.5 0.5"/>
<rect x="21.2" y="258.9" width="5.8" height="5.8" fill="#f3d24a" stroke="#caa22a" stroke-width="0.45" rx="0.6"/><path d="M22.8 263.7 l1.2 -4 l1.6 1.8" fill="none" stroke="#8a6a10" stroke-width="0.4"/><circle cx="25.799999999999997" cy="263.9" r="1" fill="#9a9a9a"/>
<text x="30.07" y="263.7" font-size="5.0" fill="#1a1a1a" text-anchor="start" font-weight="normal" style="font-family:'Liberation Sans', sans-serif" stroke="#1a1a1a" stroke-width="0.04" transform="skewX(0.05)" >UOPTraderIndicat</text>
<path d="M16.4 269.4 H20.5" stroke="#c8c8c8" stroke-width="0.4" stroke-dasharray="0.5 0.5"/>
<rect x="21.2" y="266.4" width="5.8" height="5.8" fill="#f3d24a" stroke="#caa22a" stroke-width="0.45" rx="0.6"/><path d="M22.8 271.2 l1.2 -4 l1.6 1.8" fill="none" stroke="#8a6a10" stroke-width="0.4"/><circle cx="25.799999999999997" cy="271.4" r="1" fill="#9a9a9a"/>
<text x="30.06" y="271.2" font-size="5.0" fill="#1a1a1a" text-anchor="start" font-weight="normal" style="font-family:'Liberation Sans', sans-serif" stroke="#1a1a1a" stroke-width="0.04" transform="skewX(0.05)" >Up Side Down Tre</text>
<path d="M16.4 276.9 H20.5" stroke="#c8c8c8" stroke-width="0.4" stroke-dasharray="0.5 0.5"/>
<rect x="21.2" y="273.9" width="5.8" height="5.8" fill="#f3d24a" stroke="#caa22a" stroke-width="0.45" rx="0.6"/><path d="M22.8 278.7 l1.2 -4 l1.6 1.8" fill="none" stroke="#8a6a10" stroke-width="0.4"/><circle cx="25.799999999999997" cy="278.9" r="1" fill="#9a9a9a"/>
<text x="30.06" y="278.7" font-size="5.0" fill="#1a1a1a" text-anchor="start" font-weight="normal" style="font-family:'Liberation Sans', sans-serif" stroke="#1a1a1a" stroke-width="0.04" transform="skewX(0.05)" >volatility-hypertr</text>
<path d="M16.4 284.4 H20.5" stroke="#c8c8c8" stroke-width="0.4" stroke-dasharray="0.5 0.5"/>
<rect x="21.2" y="281.4" width="5.8" height="5.8" fill="#f3d24a" stroke="#caa22a" stroke-width="0.45" rx="0.6"/><path d="M22.8 286.2 l1.2 -4 l1.6 1.8" fill="none" stroke="#8a6a10" stroke-width="0.4"/><circle cx="25.799999999999997" cy="286.4" r="1" fill="#9a9a9a"/>
<text x="30.05" y="286.2" font-size="5.0" fill="#1a1a1a" text-anchor="start" font-weight="normal" style="font-family:'Liberation Sans', sans-serif" stroke="#1a1a1a" stroke-width="0.04" transform="skewX(0.05)" >WeekDays&amp;Holid</text>
<path d="M16.4 291.9 H20.5" stroke="#c8c8c8" stroke-width="0.4" stroke-dasharray="0.5 0.5"/>
<rect x="21.2" y="288.9" width="5.8" height="5.8" fill="#f3d24a" stroke="#caa22a" stroke-width="0.45" rx="0.6"/><path d="M22.8 293.7 l1.2 -4 l1.6 1.8" fill="none" stroke="#8a6a10" stroke-width="0.4"/><circle cx="25.799999999999997" cy="293.9" r="1" fill="#9a9a9a"/>
<text x="30.04" y="293.7" font-size="5.0" fill="#1a1a1a" text-anchor="start" font-weight="normal" style="font-family:'Liberation Sans', sans-serif" stroke="#1a1a1a" stroke-width="0.04" transform="skewX(0.05)" >XU ma simple BT</text>
<path d="M16.4 299.4 H20.5" stroke="#c8c8c8" stroke-width="0.4" stroke-dasharray="0.5 0.5"/>
<rect x="21.2" y="296.4" width="5.8" height="5.8" fill="#f3d24a" stroke="#caa22a" stroke-width="0.45" rx="0.6"/><path d="M22.8 301.2 l1.2 -4 l1.6 1.8" fill="none" stroke="#8a6a10" stroke-width="0.4"/><circle cx="25.799999999999997" cy="301.4" r="1" fill="#9a9a9a"/>
<text x="30.04" y="301.2" font-size="5.0" fill="#1a1a1a" text-anchor="start" font-weight="normal" style="font-family:'Liberation Sans', sans-serif" stroke="#1a1a1a" stroke-width="0.04" transform="skewX(0.05)" >YFX_ind_Symbol</text>
<path d="M16.4 306.9 H20.5" stroke="#c8c8c8" stroke-width="0.4" stroke-dasharray="0.5 0.5"/>
<rect x="21.2" y="303.9" width="5.8" height="5.8" fill="#f3d24a" stroke="#caa22a" stroke-width="0.45" rx="0.6"/><path d="M22.8 308.7 l1.2 -4 l1.6 1.8" fill="none" stroke="#8a6a10" stroke-width="0.4"/><circle cx="25.799999999999997" cy="308.9" r="1" fill="#9a9a9a"/>
<text x="30.03" y="308.7" font-size="5.0" fill="#1a1a1a" text-anchor="start" font-weight="normal" style="font-family:'Liberation Sans', sans-serif" stroke="#1a1a1a" stroke-width="0.04" transform="skewX(0.05)" >Yzyz</text>
<path d="M16.4 314.4 H20.5" stroke="#c8c8c8" stroke-width="0.4" stroke-dasharray="0.5 0.5"/>
<rect x="21.2" y="311.4" width="5.8" height="5.8" fill="#f3d24a" stroke="#caa22a" stroke-width="0.45" rx="0.6"/><path d="M22.8 316.2 l1.2 -4 l1.6 1.8" fill="none" stroke="#8a6a10" stroke-width="0.4"/><circle cx="25.799999999999997" cy="316.4" r="1" fill="#9a9a9a"/>
<text x="30.02" y="316.2" font-size="5.0" fill="#1a1a1a" text-anchor="start" font-weight="normal" style="font-family:'Liberation Sans', sans-serif" stroke="#1a1a1a" stroke-width="0.04" transform="skewX(0.05)" >Zero</text>
<path d="M16.4 321.9 H20.5" stroke="#c8c8c8" stroke-width="0.4" stroke-dasharray="0.5 0.5"/>
<rect x="21.2" y="318.9" width="5.8" height="5.8" fill="#f3d24a" stroke="#caa22a" stroke-width="0.45" rx="0.6"/><path d="M22.8 323.7 l1.2 -4 l1.6 1.8" fill="none" stroke="#8a6a10" stroke-width="0.4"/><circle cx="25.799999999999997" cy="323.9" r="1" fill="#9a9a9a"/>
<text x="30.02" y="323.7" font-size="5.0" fill="#1a1a1a" text-anchor="start" font-weight="normal" style="font-family:'Liberation Sans', sans-serif" stroke="#1a1a1a" stroke-width="0.04" transform="skewX(0.05)" >ZeroLag-Tema-M</text>
<path d="M16.4 329.4 H20.5" stroke="#c8c8c8" stroke-width="0.4" stroke-dasharray="0.5 0.5"/>
<rect x="21.2" y="326.4" width="5.8" height="5.8" fill="#f3d24a" stroke="#caa22a" stroke-width="0.45" rx="0.6"/><path d="M22.8 331.2 l1.2 -4 l1.6 1.8" fill="none" stroke="#8a6a10" stroke-width="0.4"/><circle cx="25.799999999999997" cy="331.4" r="1" fill="#9a9a9a"/>
<text x="30.01" y="331.2" font-size="5.0" fill="#1a1a1a" text-anchor="start" font-weight="normal" style="font-family:'Liberation Sans', sans-serif" stroke="#1a1a1a" stroke-width="0.04" transform="skewX(0.05)" >Zwinner trend</text>
<circle cx="24.6" cy="336.9" r="2.8" fill="#4aa0e8"/><path d="M23 335.4 c1 1 2 0 2.5 1.5 c-0.5 1 -1.5 1 -1 2.2" fill="#7ac04a"/>
<text x="30.00" y="338.7" font-size="5.0" fill="#1a1a1a" text-anchor="start" font-weight="normal" style="font-family:'Liberation Sans', sans-serif" stroke="#1a1a1a" stroke-width="0.04" transform="skewX(0.05)" >2391 more...</text>
<rect x="5.5" y="342.7" width="3.4" height="3.4" fill="#fff" stroke="#9a9a9a" stroke-width="0.35"/><path d="M6.3 344.4 h1.8" stroke="#333" stroke-width="0.4"/>
<path d="M12.2 343.79999999999995 l3 -2 l3.6 1.6 l-3 2 z" fill="#4aa0e0" stroke="#2a70b0" stroke-width="0.3"/><path d="M12.799999999999999 344.79999999999995 l2.8 1.6 l3 -1.6 v1 l-3 1.8 l-2.8 -1.8 z" fill="#e8c030"/><circle cx="17.6" cy="346.59999999999997" r="0.8" fill="#888"/>
<text x="21.50" y="346.2" font-size="5.0" fill="#1a1a1a" text-anchor="start" font-weight="normal" style="font-family:'Liberation Sans', sans-serif" stroke="#1a1a1a" stroke-width="0.04" transform="skewX(0.05)" >Expert Advisors</text>
<rect x="14.4" y="350.2" width="3.4" height="3.4" fill="#fff" stroke="#9a9a9a" stroke-width="0.35"/><path d="M15.2 351.9 h1.8" stroke="#333" stroke-width="0.4"/>
<path d="M21 351.29999999999995 l3 -2 l3.6 1.6 l-3 2 z" fill="#4aa0e0"/><rect x="24" y="351.7" width="3.4" height="3" fill="#3a7bd0"/>
<text x="29.99" y="353.7" font-size="5.0" fill="#1a1a1a" text-anchor="start" font-weight="normal" style="font-family:'Liberation Sans', sans-serif" stroke="#1a1a1a" stroke-width="0.04" transform="skewX(0.05)" >Market</text>
<path d="M30.4 358.79999999999995 l3 -2 l3.6 1.6 l-3 2 z" fill="#4aa0e0" stroke="#2a70b0" stroke-width="0.3"/><path d="M31.0 359.79999999999995 l2.8 1.6 l3 -1.6 v1 l-3 1.8 l-2.8 -1.8 z" fill="#e8c030"/><circle cx="35.8" cy="361.59999999999997" r="0.8" fill="#888"/>
<text x="39.08" y="361.2" font-size="5.0" fill="#1a1a1a" text-anchor="start" font-weight="normal" style="font-family:'Liberation Sans', sans-serif" stroke="#1a1a1a" stroke-width="0.04" transform="skewX(0.05)" >Trade Assistant</text>
<path d="M16.4 366.9 H20.5" stroke="#c8c8c8" stroke-width="0.4" stroke-dasharray="0.5 0.5"/>
<path d="M21 366.29999999999995 l3 -2 l3.6 1.6 l-3 2 z" fill="#4aa0e0" stroke="#2a70b0" stroke-width="0.3"/><path d="M21.6 367.29999999999995 l2.8 1.6 l3 -1.6 v1 l-3 1.8 l-2.8 -1.8 z" fill="#e8c030"/><circle cx="26.4" cy="369.09999999999997" r="0.8" fill="#888"/>
<text x="29.98" y="368.7" font-size="5.0" fill="#1a1a1a" text-anchor="start" font-weight="normal" style="font-family:'Liberation Sans', sans-serif" stroke="#1a1a1a" stroke-width="0.04" transform="skewX(0.05)" >bb-macd</text>
<path d="M16.4 374.4 H20.5" stroke="#c8c8c8" stroke-width="0.4" stroke-dasharray="0.5 0.5"/>
<path d="M21 373.79999999999995 l3 -2 l3.6 1.6 l-3 2 z" fill="#4aa0e0" stroke="#2a70b0" stroke-width="0.3"/><path d="M21.6 374.79999999999995 l2.8 1.6 l3 -1.6 v1 l-3 1.8 l-2.8 -1.8 z" fill="#e8c030"/><circle cx="26.4" cy="376.59999999999997" r="0.8" fill="#888"/>
<text x="29.97" y="376.2" font-size="5.0" fill="#1a1a1a" text-anchor="start" font-weight="normal" style="font-family:'Liberation Sans', sans-serif" stroke="#1a1a1a" stroke-width="0.04" transform="skewX(0.05)" >Fisher Indicator</text>
<path d="M16.4 381.9 H20.5" stroke="#c8c8c8" stroke-width="0.4" stroke-dasharray="0.5 0.5"/>
<path d="M21 381.29999999999995 l3 -2 l3.6 1.6 l-3 2 z" fill="#4aa0e0" stroke="#2a70b0" stroke-width="0.3"/><path d="M21.6 382.29999999999995 l2.8 1.6 l3 -1.6 v1 l-3 1.8 l-2.8 -1.8 z" fill="#e8c030"/><circle cx="26.4" cy="384.09999999999997" r="0.8" fill="#888"/>
<text x="29.97" y="383.7" font-size="5.0" fill="#1a1a1a" text-anchor="start" font-weight="normal" style="font-family:'Liberation Sans', sans-serif" stroke="#1a1a1a" stroke-width="0.04" transform="skewX(0.05)" >MACD Sample</text>
<path d="M16.4 389.4 H20.5" stroke="#c8c8c8" stroke-width="0.4" stroke-dasharray="0.5 0.5"/>
<path d="M21 388.79999999999995 l3 -2 l3.6 1.6 l-3 2 z" fill="#4aa0e0" stroke="#2a70b0" stroke-width="0.3"/><path d="M21.6 389.79999999999995 l2.8 1.6 l3 -1.6 v1 l-3 1.8 l-2.8 -1.8 z" fill="#e8c030"/><circle cx="26.4" cy="391.59999999999997" r="0.8" fill="#888"/>
<text x="29.96" y="391.2" font-size="5.0" fill="#1a1a1a" text-anchor="start" font-weight="normal" style="font-family:'Liberation Sans', sans-serif" stroke="#1a1a1a" stroke-width="0.04" transform="skewX(0.05)" >Moving Average</text>
<path d="M16.4 396.9 H20.5" stroke="#c8c8c8" stroke-width="0.4" stroke-dasharray="0.5 0.5"/>
<path d="M21 396.29999999999995 l3 -2 l3.6 1.6 l-3 2 z" fill="#4aa0e0" stroke="#2a70b0" stroke-width="0.3"/><path d="M21.6 397.29999999999995 l2.8 1.6 l3 -1.6 v1 l-3 1.8 l-2.8 -1.8 z" fill="#e8c030"/><circle cx="26.4" cy="399.09999999999997" r="0.8" fill="#888"/>
<text x="29.95" y="398.7" font-size="5.0" fill="#1a1a1a" text-anchor="start" font-weight="normal" style="font-family:'Liberation Sans', sans-serif" stroke="#1a1a1a" stroke-width="0.04" transform="skewX(0.05)" >RenkoLiveCharts_</text>
<path d="M16.4 404.4 H20.5" stroke="#c8c8c8" stroke-width="0.4" stroke-dasharray="0.5 0.5"/>
<path d="M21 403.79999999999995 l3 -2 l3.6 1.6 l-3 2 z" fill="#4aa0e0" stroke="#2a70b0" stroke-width="0.3"/><path d="M21.6 404.79999999999995 l2.8 1.6 l3 -1.6 v1 l-3 1.8 l-2.8 -1.8 z" fill="#e8c030"/><circle cx="26.4" cy="406.59999999999997" r="0.8" fill="#888"/>
<text x="29.95" y="406.2" font-size="5.0" fill="#1a1a1a" text-anchor="start" font-weight="normal" style="font-family:'Liberation Sans', sans-serif" stroke="#1a1a1a" stroke-width="0.04" transform="skewX(0.05)" >smFisherTransfor</text>
<path d="M16.4 411.9 H20.5" stroke="#c8c8c8" stroke-width="0.4" stroke-dasharray="0.5 0.5"/>
<path d="M21 411.29999999999995 l3 -2 l3.6 1.6 l-3 2 z" fill="#4aa0e0" stroke="#2a70b0" stroke-width="0.3"/><path d="M21.6 412.29999999999995 l2.8 1.6 l3 -1.6 v1 l-3 1.8 l-2.8 -1.8 z" fill="#e8c030"/><circle cx="26.4" cy="414.09999999999997" r="0.8" fill="#888"/>
<text x="29.94" y="413.7" font-size="5.0" fill="#1a1a1a" text-anchor="start" font-weight="normal" style="font-family:'Liberation Sans', sans-serif" stroke="#1a1a1a" stroke-width="0.04" transform="skewX(0.05)" >x</text>
</g>
<rect x="1" y="408.5" width="68.4" height="0.5" fill="#a8a8a8"/>
<path d="M2.4 409 v8.5 h29.2 v-8.5" fill="#ffffff" stroke="#6a6a6a" stroke-width="0.5"/>
<text x="6.34" y="415.9" font-size="5.2" fill="#222" text-anchor="start" font-weight="normal" style="font-family:'Liberation Sans', sans-serif" stroke="#222" stroke-width="0.07" transform="skewX(0.05)" >Common</text>
<text x="35.64" y="415.9" font-size="5.2" fill="#a0a0a0" text-anchor="start" font-weight="normal" style="font-family:'Liberation Sans', sans-serif" stroke="#a0a0a0" stroke-width="0.07" transform="skewX(0.05)" >Favorites</text>
<rect x="60.2" y="411" width="0.4" height="4.5" fill="#9a9a9a"/>
<defs><linearGradient id="lborder" x1="0" x2="1" y1="0" y2="0"><stop offset="0" stop-color="#6a6a6a"/><stop offset="1" stop-color="#141414"/></linearGradient></defs>
<rect x="76.7" y="40.7" width="723.3" height="370" fill="#000"/>
<rect x="76.7" y="40.7" width="723.3" height="1.2" fill="#3c3c3c"/>
<rect x="76.7" y="40.7" width="3.2" height="370" fill="url(#lborder)"/>
<rect x="798.7" y="40.7" width="1.3" height="370" fill="#e0e0e0"/>
<rect x="0" y="38.9" width="800" height="1.3" fill="#f8f8f8"/>
<rect x="79.6" y="41.9" width="701" height="0.7" fill="#6a6a6a"/>
<rect x="780" y="42.2" width="0.7" height="360.6" fill="#b4b4b4"/>
<rect x="78.7" y="248.1" width="701.9" height="0.9" fill="#b4b4b4"/>
<rect x="78.7" y="325.9" width="701.9" height="0.9" fill="#b4b4b4"/>
<rect x="78.7" y="402.1" width="701.9" height="0.8" fill="#b4b4b4"/>
<clipPath id="mainclip"><rect x="79.7" y="42.9" width="700.3" height="205.3"/></clipPath>
<clipPath id="sub1clip"><rect x="79.7" y="249" width="700.3" height="77"/></clipPath>
<clipPath id="sub2clip"><rect x="79.7" y="326.8" width="700.3" height="75.4"/></clipPath>
<g clip-path="url(#mainclip)">
<path d="M79.00,108.30 C80.68,109.42 85.57,112.03 89.10,115.00 C92.63,117.97 96.50,122.22 100.20,126.10 C103.90,129.98 107.60,134.03 111.30,138.30 C115.00,142.57 118.68,147.43 122.40,151.70 C126.12,155.97 130.63,160.75 133.60,163.90 C136.57,167.05 137.62,169.12 140.20,170.60 C142.78,172.08 146.32,172.62 149.10,172.80 C151.88,172.98 155.60,171.88 156.90,171.70" fill="none" stroke="#d40000" stroke-width="1.2" stroke-linecap="round"/>
<path d="M92.40,91.70 C93.70,93.18 97.05,97.08 100.20,100.60 C103.35,104.12 107.60,108.55 111.30,112.80 C115.00,117.05 119.07,121.85 122.40,126.10 C125.73,130.35 128.70,135.15 131.30,138.30 C133.90,141.45 135.58,143.33 138.00,145.00 C140.42,146.67 144.50,147.75 145.80,148.30" fill="none" stroke="#d40000" stroke-width="1.2" stroke-linecap="round"/>
<path d="M106.90,91.70 C108.38,93.18 112.83,97.27 115.80,100.60 C118.77,103.93 122.12,108.00 124.70,111.70 C127.28,115.40 129.45,120.03 131.30,122.80 C133.15,125.57 135.05,127.38 135.80,128.30" fill="none" stroke="#d40000" stroke-width="1.2" stroke-linecap="round"/>
<path d="M299.40,70.10 C300.88,71.15 305.03,73.42 308.30,76.40 C311.57,79.38 315.43,83.85 319.00,88.00 C322.57,92.15 325.92,96.08 329.70,101.30 C333.48,106.52 338.32,114.27 341.70,119.30 C345.08,124.33 346.77,127.50 350.00,131.50 C353.23,135.50 357.03,139.85 361.10,143.30 C365.17,146.75 370.32,150.42 374.40,152.20 C378.48,153.98 383.00,153.88 385.60,154.00 C388.20,154.12 389.27,153.08 390.00,152.90" fill="none" stroke="#d40000" stroke-width="1.2" stroke-linecap="round"/>
<path d="M312.80,56.10 C315.02,58.52 321.67,64.98 326.10,70.60 C330.53,76.22 335.32,83.50 339.40,89.80 C343.48,96.10 346.88,103.33 350.60,108.40 C354.32,113.47 357.63,116.87 361.70,120.20 C365.77,123.53 372.13,126.95 375.00,128.40 C377.87,129.85 378.25,128.82 378.90,128.90" fill="none" stroke="#d40000" stroke-width="1.2" stroke-linecap="round"/>
<path d="M326.10,57.60 C328.32,60.53 334.95,68.70 339.40,75.20 C343.85,81.70 349.08,91.45 352.80,96.60 C356.52,101.75 360.22,104.52 361.70,106.10" fill="none" stroke="#d40000" stroke-width="1.2" stroke-linecap="round"/>
<path d="M396.70,150.70 C398.55,151.32 403.92,152.67 407.80,154.40 C411.68,156.13 416.12,158.13 420.00,161.10 C423.88,164.07 427.40,168.87 431.10,172.20 C434.80,175.53 438.50,179.53 442.20,181.10 C445.90,182.67 448.85,181.97 453.30,181.60 C457.75,181.23 466.30,179.35 468.90,178.90" fill="none" stroke="#d40000" stroke-width="1.2" stroke-linecap="round"/>
<path d="M475.60,176.70 C477.45,177.43 482.63,180.07 486.70,181.10 C490.77,182.13 497.78,182.60 500.00,182.90" fill="none" stroke="#d40000" stroke-width="1.2" stroke-linecap="round"/>
<path d="M405.60,127.10 C407.45,128.32 414.30,132.80 416.70,134.40 C419.10,136.00 417.60,134.65 420.00,136.70 C422.40,138.75 427.40,143.55 431.10,146.70 C434.80,149.85 439.23,153.83 442.20,155.60 C445.17,157.37 447.78,157.02 448.90,157.30" fill="none" stroke="#d40000" stroke-width="1.2" stroke-linecap="round"/>
<path d="M425.60,126.20 C426.33,126.75 427.78,127.38 430.00,129.50 C432.22,131.62 437.42,137.33 438.90,138.90" fill="none" stroke="#d40000" stroke-width="1.2" stroke-linecap="round"/>
<polyline points="485.6,155.1 490.0,157.1" fill="none" stroke="#d40000" stroke-width="1.2" stroke-linejoin="round" stroke-linecap="round" />
<path d="M606.00,127.30 C607.40,128.12 611.88,130.57 614.40,132.20 C616.92,133.83 618.87,135.98 621.10,137.10 C623.33,138.22 625.38,138.23 627.80,138.90 C630.22,139.57 634.30,140.73 635.60,141.10" fill="none" stroke="#d40000" stroke-width="1.2" stroke-linecap="round"/>
<path d="M159.30,220.00 C161.02,218.85 165.03,216.68 169.60,213.10 C174.17,209.52 180.60,202.37 186.70,198.50 C192.80,194.63 200.90,192.77 206.20,189.90 C211.50,187.03 214.02,185.37 218.50,181.30 C222.98,177.23 229.33,169.60 233.10,165.50 C236.87,161.40 236.80,162.25 241.10,156.70 C245.40,151.15 254.08,137.77 258.90,132.20 C263.72,126.63 266.30,126.07 270.00,123.30 C273.70,120.53 278.13,117.00 281.10,115.60 C284.07,114.20 285.38,114.53 287.80,114.90 C290.22,115.27 294.30,117.32 295.60,117.80" fill="none" stroke="#00d800" stroke-width="1.2" stroke-linecap="round"/>
<path d="M209.20,213.60 C211.55,211.08 217.62,204.65 223.30,198.50 C228.98,192.35 237.37,183.48 243.30,176.70 C249.23,169.92 253.33,163.55 258.90,157.80 C264.47,152.05 272.25,145.17 276.70,142.20 C281.15,139.23 284.12,140.37 285.60,140.00" fill="none" stroke="#00d800" stroke-width="1.2" stroke-linecap="round"/>
<path d="M222.90,216.10 C224.08,214.72 226.22,212.15 230.00,207.80 C233.78,203.45 240.42,196.12 245.60,190.00 C250.78,183.88 256.67,176.10 261.10,171.10 C265.53,166.10 269.23,162.48 272.20,160.00 C275.17,157.52 277.78,156.83 278.90,156.20" fill="none" stroke="#00d800" stroke-width="1.2" stroke-linecap="round"/>
<polyline points="179.3,230.2 186.2,224.1" fill="none" stroke="#00d800" stroke-width="1.2" stroke-linejoin="round" stroke-linecap="round" />
<path d="M502.80,231.10 C505.20,229.98 512.57,226.98 517.20,224.40 C521.83,221.82 525.78,219.67 530.60,215.60 C535.42,211.53 540.92,203.90 546.10,200.00 C551.28,196.10 557.25,194.98 561.70,192.20 C566.15,189.42 569.57,185.52 572.80,183.30 C576.03,181.08 577.87,180.38 581.10,178.90 C584.33,177.42 588.57,174.88 592.20,174.40 C595.83,173.92 601.12,175.73 602.90,176.00" fill="none" stroke="#00d800" stroke-width="1.2" stroke-linecap="round"/>
<path d="M526.10,244.40 C528.32,242.18 535.52,234.62 539.40,231.10 C543.28,227.58 547.73,224.60 549.40,223.30" fill="none" stroke="#00d800" stroke-width="1.2" stroke-linecap="round"/>
<path d="M556.10,221.10 C558.13,219.43 564.13,214.07 568.30,211.10 C572.47,208.13 577.12,205.22 581.10,203.30 C585.08,201.38 590.35,200.22 592.20,199.60" fill="none" stroke="#00d800" stroke-width="1.2" stroke-linecap="round"/>
<polyline points="596.0,175.7 603.0,175.7" fill="none" stroke="#00d800" stroke-width="1.2" stroke-linejoin="round" stroke-linecap="round" />
<rect x="78.50" y="142.2" width="2.2" height="12.5" fill="#ff0000"/>
<rect x="81.83" y="148.9" width="2.2" height="12.5" fill="#ff0000"/>
<rect x="85.17" y="155.0" width="2.2" height="12.5" fill="#ff0000"/>
<rect x="88.50" y="161.7" width="2.2" height="12.5" fill="#ff0000"/>
<rect x="91.83" y="167.8" width="2.2" height="12.5" fill="#ff0000"/>
<rect x="95.17" y="174.0" width="2.2" height="12.5" fill="#ff0000"/>
<rect x="98.50" y="180.0" width="2.2" height="12.5" fill="#ff0000"/>
<rect x="101.83" y="186.0" width="2.2" height="12.5" fill="#ff0000"/>
<rect x="105.17" y="192.0" width="2.2" height="12.5" fill="#ff0000"/>
<rect x="108.50" y="198.3" width="2.2" height="12.5" fill="#ff0000"/>
<rect x="111.83" y="204.4" width="2.2" height="12.5" fill="#ff0000"/>
<rect x="115.17" y="211.1" width="2.2" height="12.5" fill="#ff0000"/>
<rect x="118.50" y="217.2" width="2.2" height="12.5" fill="#ff0000"/>
<rect x="121.83" y="223.3" width="2.2" height="12.5" fill="#ff0000"/>
<rect x="125.97" y="229.70" width="0.6" height="8.10" fill="#900000"/>
<rect x="125.17" y="217.2" width="2.2" height="12.5" fill="#ff0000"/>
<rect x="129.30" y="211" width="0.6" height="12.30" fill="#900000"/>
<rect x="128.50" y="223.3" width="2.2" height="12.5" fill="#ff0000"/>
<rect x="132.63" y="229.70" width="0.6" height="8.10" fill="#900000"/>
<rect x="131.83" y="217.2" width="2.2" height="12.5" fill="#ff0000"/>
<rect x="135.17" y="211.1" width="2.2" height="12.5" fill="#ff0000"/>
<rect x="138.50" y="204.4" width="2.2" height="12.5" fill="#ff0000"/>
<rect x="141.83" y="198.3" width="2.2" height="12.5" fill="#ff0000"/>
<rect x="145.17" y="192.4" width="2.2" height="12.5" fill="#ff0000"/>
<rect x="148.50" y="186.4" width="2.2" height="12.5" fill="#ff0000"/>
<rect x="151.83" y="180.0" width="2.2" height="12.5" fill="#00f000"/>
<rect x="155.17" y="173.6" width="2.2" height="12.5" fill="#00f000"/>
<rect x="158.50" y="167.4" width="2.2" height="12.5" fill="#00f000"/>
<rect x="161.83" y="161.1" width="2.2" height="12.5" fill="#00f000"/>
<rect x="165.17" y="155.2" width="2.2" height="12.5" fill="#00f000"/>
<rect x="169.30" y="153" width="0.6" height="8.60" fill="#008a00"/>
<rect x="168.50" y="161.6" width="2.2" height="12.5" fill="#00f000"/>
<rect x="171.83" y="155.2" width="2.2" height="12.5" fill="#00f000"/>
<rect x="175.17" y="149.0" width="2.2" height="12.5" fill="#00f000"/>
<rect x="178.50" y="142.6" width="2.2" height="12.5" fill="#00f000"/>
<rect x="181.83" y="136.1" width="2.2" height="12.5" fill="#00f000"/>
<rect x="185.97" y="134" width="0.6" height="8.60" fill="#008a00"/>
<rect x="185.17" y="142.6" width="2.2" height="12.5" fill="#00f000"/>
<rect x="188.50" y="151.8" width="2.2" height="3.5" fill="#00f000"/>
<rect x="192.63" y="164.00" width="0.6" height="10.00" fill="#008a00"/>
<rect x="191.83" y="151.5" width="2.2" height="12.5" fill="#00f000"/>
<rect x="195.17" y="145.1" width="2.2" height="12.5" fill="#00f000"/>
<rect x="199.30" y="140" width="0.6" height="11.50" fill="#008a00"/>
<rect x="199.30" y="164.00" width="0.6" height="2.00" fill="#008a00"/>
<rect x="198.50" y="151.5" width="2.2" height="12.5" fill="#00f000"/>
<rect x="201.83" y="145.1" width="2.2" height="12.5" fill="#00f000"/>
<rect x="205.17" y="139.0" width="2.2" height="12.5" fill="#00f000"/>
<rect x="208.50" y="132.2" width="2.2" height="12.5" fill="#00f000"/>
<rect x="211.83" y="126.1" width="2.2" height="12.5" fill="#00f000"/>
<rect x="215.17" y="120.0" width="2.2" height="12.5" fill="#00f000"/>
<rect x="218.50" y="113.9" width="2.2" height="12.5" fill="#00f000"/>
<rect x="221.83" y="107.2" width="2.2" height="12.5" fill="#00f000"/>
<rect x="225.17" y="101.7" width="2.2" height="12.5" fill="#00f000"/>
<rect x="228.50" y="95.6" width="2.2" height="12.5" fill="#00f000"/>
<rect x="232.63" y="89.4" width="0.6" height="12.30" fill="#008a00"/>
<rect x="231.83" y="101.7" width="2.2" height="12.5" fill="#00f000"/>
<rect x="235.97" y="108.10" width="0.6" height="11.30" fill="#008a00"/>
<rect x="235.17" y="95.6" width="2.2" height="12.5" fill="#00f000"/>
<rect x="238.50" y="89.4" width="2.2" height="12.5" fill="#00f000"/>
<rect x="241.83" y="83.1" width="2.2" height="12.5" fill="#00f000"/>
<rect x="245.16" y="76.7" width="2.2" height="12.5" fill="#00f000"/>
<rect x="248.50" y="70.3" width="2.2" height="12.5" fill="#00f000"/>
<rect x="251.83" y="64.1" width="2.2" height="12.5" fill="#00f000"/>
<rect x="255.16" y="58.1" width="2.2" height="12.5" fill="#00f000"/>
<rect x="259.30" y="54.4" width="0.6" height="9.70" fill="#008a00"/>
<rect x="258.50" y="64.1" width="2.2" height="12.5" fill="#00f000"/>
<rect x="262.63" y="58.9" width="0.6" height="5.50" fill="#008a00"/>
<rect x="261.83" y="64.4" width="2.2" height="12.5" fill="#00f000"/>
<rect x="265.16" y="62.2" width="2.2" height="12.5" fill="#00f000"/>
<rect x="269.30" y="52.2" width="0.6" height="3.90" fill="#008a00"/>
<rect x="268.50" y="56.1" width="2.2" height="12.5" fill="#00f000"/>
<rect x="271.83" y="62.2" width="2.2" height="12.5" fill="#00f000"/>
<rect x="275.16" y="68.6" width="2.2" height="12.5" fill="#00f000"/>
<rect x="278.50" y="74.8" width="2.2" height="12.5" fill="#00f000"/>
<rect x="281.83" y="80.8" width="2.2" height="12.5" fill="#00f000"/>
<rect x="285.16" y="87.8" width="2.2" height="12.5" fill="#00f000"/>
<rect x="288.50" y="93.3" width="2.2" height="12.5" fill="#00f000"/>
<rect x="291.83" y="100.0" width="2.2" height="12.5" fill="#ff0000"/>
<rect x="295.16" y="105.6" width="2.2" height="12.5" fill="#ff0000"/>
<rect x="298.50" y="112.2" width="2.2" height="12.5" fill="#ff0000"/>
<rect x="301.83" y="117.8" width="2.2" height="12.5" fill="#ff0000"/>
<rect x="305.16" y="124.4" width="2.2" height="12.5" fill="#ff0000"/>
<rect x="308.50" y="131.1" width="2.2" height="12.5" fill="#ff0000"/>
<rect x="311.83" y="136.7" width="2.2" height="12.5" fill="#ff0000"/>
<rect x="315.16" y="143.3" width="2.2" height="12.5" fill="#ff0000"/>
<rect x="318.50" y="148.9" width="2.2" height="12.5" fill="#ff0000"/>
<rect x="321.83" y="155.6" width="2.2" height="12.5" fill="#ff0000"/>
<rect x="325.16" y="162.2" width="2.2" height="12.5" fill="#ff0000"/>
<rect x="328.50" y="167.8" width="2.2" height="12.5" fill="#ff0000"/>
<rect x="331.83" y="174.4" width="2.2" height="12.5" fill="#ff0000"/>
<rect x="335.16" y="180.0" width="2.2" height="12.5" fill="#ff0000"/>
<rect x="338.50" y="186.7" width="2.2" height="12.5" fill="#ff0000"/>
<rect x="341.83" y="192.2" width="2.2" height="12.5" fill="#ff0000"/>
<rect x="345.16" y="198.9" width="2.2" height="12.5" fill="#ff0000"/>
<rect x="348.50" y="205.6" width="2.2" height="12.5" fill="#ff0000"/>
<rect x="351.83" y="198.9" width="2.2" height="12.5" fill="#ff0000"/>
<rect x="355.16" y="192.2" width="2.2" height="12.5" fill="#ff0000"/>
<rect x="358.50" y="186.7" width="2.2" height="12.5" fill="#ff0000"/>
<rect x="361.83" y="180.3" width="2.2" height="12.5" fill="#ff0000"/>
<rect x="365.96" y="180" width="0.6" height="6.70" fill="#900000"/>
<rect x="365.16" y="186.7" width="2.2" height="12.5" fill="#ff0000"/>
<rect x="369.30" y="183.9" width="0.6" height="8.90" fill="#900000"/>
<rect x="368.50" y="192.8" width="2.2" height="12.5" fill="#ff0000"/>
<rect x="371.83" y="186.7" width="2.2" height="12.5" fill="#ff0000"/>
<rect x="375.16" y="180.3" width="2.2" height="12.5" fill="#ff0000"/>
<rect x="378.50" y="174.4" width="2.2" height="12.5" fill="#ff0000"/>
<rect x="381.83" y="168.1" width="2.2" height="12.5" fill="#ff0000"/>
<rect x="385.96" y="174.70" width="0.6" height="5.30" fill="#008a00"/>
<rect x="385.16" y="162.2" width="2.2" height="12.5" fill="#00f000"/>
<rect x="389.30" y="168.90" width="0.6" height="12.10" fill="#008a00"/>
<rect x="388.50" y="156.4" width="2.2" height="12.5" fill="#00f000"/>
<rect x="391.83" y="162.5" width="2.2" height="12.5" fill="#ff0000"/>
<rect x="395.16" y="168.5" width="2.2" height="12.5" fill="#ff0000"/>
<rect x="398.50" y="174.7" width="2.2" height="12.5" fill="#ff0000"/>
<rect x="401.83" y="180.7" width="2.2" height="12.5" fill="#ff0000"/>
<rect x="405.16" y="186.7" width="2.2" height="12.5" fill="#ff0000"/>
<rect x="408.50" y="192.9" width="2.2" height="12.5" fill="#ff0000"/>
<rect x="411.83" y="199.1" width="2.2" height="12.5" fill="#ff0000"/>
<rect x="415.96" y="194.7" width="0.6" height="6.30" fill="#900000"/>
<rect x="415.96" y="213.50" width="0.6" height="2.50" fill="#900000"/>
<rect x="415.16" y="201.0" width="2.2" height="12.5" fill="#ff0000"/>
<rect x="419.30" y="193.3" width="0.6" height="11.10" fill="#900000"/>
<rect x="418.50" y="204.4" width="2.2" height="12.5" fill="#ff0000"/>
<rect x="421.83" y="210.7" width="2.2" height="12.5" fill="#ff0000"/>
<rect x="425.16" y="216.9" width="2.2" height="12.5" fill="#ff0000"/>
<rect x="428.50" y="223.3" width="2.2" height="12.5" fill="#ff0000"/>
<rect x="432.63" y="223" width="0.6" height="6.30" fill="#900000"/>
<rect x="431.83" y="229.3" width="2.2" height="12.5" fill="#ff0000"/>
<rect x="435.96" y="235.80" width="0.6" height="4.20" fill="#900000"/>
<rect x="435.16" y="223.3" width="2.2" height="12.5" fill="#ff0000"/>
<rect x="438.50" y="217.0" width="2.2" height="12.5" fill="#ff0000"/>
<rect x="441.83" y="210.6" width="2.2" height="12.5" fill="#ff0000"/>
<rect x="445.16" y="205.0" width="2.2" height="12.5" fill="#ff0000"/>
<rect x="448.50" y="198.3" width="2.2" height="12.5" fill="#ff0000"/>
<rect x="451.83" y="192.8" width="2.2" height="12.5" fill="#ff0000"/>
<rect x="455.96" y="198.60" width="0.6" height="4.40" fill="#008a00"/>
<rect x="455.16" y="186.1" width="2.2" height="12.5" fill="#00f000"/>
<rect x="458.50" y="192.8" width="2.2" height="12.5" fill="#ff0000"/>
<rect x="461.83" y="198.3" width="2.2" height="12.5" fill="#ff0000"/>
<rect x="465.16" y="192.8" width="2.2" height="12.5" fill="#ff0000"/>
<rect x="469.30" y="198.60" width="0.6" height="2.40" fill="#008a00"/>
<rect x="468.50" y="186.1" width="2.2" height="12.5" fill="#00f000"/>
<rect x="471.83" y="192.8" width="2.2" height="12.5" fill="#ff0000"/>
<rect x="475.16" y="198.6" width="2.2" height="12.5" fill="#ff0000"/>
<rect x="478.50" y="204.7" width="2.2" height="12.5" fill="#ff0000"/>
<rect x="481.83" y="211.1" width="2.2" height="12.5" fill="#ff0000"/>
<rect x="485.16" y="216.7" width="2.2" height="12.5" fill="#ff0000"/>
<rect x="488.50" y="211.1" width="2.2" height="12.5" fill="#ff0000"/>
<rect x="491.83" y="204.4" width="2.2" height="12.5" fill="#ff0000"/>
<rect x="495.16" y="197.8" width="2.2" height="12.5" fill="#ff0000"/>
<rect x="498.50" y="192.2" width="2.2" height="12.5" fill="#00f000"/>
<rect x="501.83" y="185.6" width="2.2" height="12.5" fill="#00f000"/>
<rect x="505.16" y="180.0" width="2.2" height="12.5" fill="#00f000"/>
<rect x="509.30" y="178" width="0.6" height="7.60" fill="#900000"/>
<rect x="508.50" y="185.6" width="2.2" height="12.5" fill="#ff0000"/>
<rect x="511.83" y="180.0" width="2.2" height="12.5" fill="#00f000"/>
<rect x="515.96" y="172" width="0.6" height="7.00" fill="#008a00"/>
<rect x="515.96" y="182.50" width="0.6" height="13.50" fill="#008a00"/>
<rect x="515.16" y="179.0" width="2.2" height="3.5" fill="#00f000"/>
<rect x="518.50" y="173.3" width="2.2" height="12.5" fill="#00f000"/>
<rect x="522.63" y="180.30" width="0.6" height="4.70" fill="#008a00"/>
<rect x="521.83" y="167.8" width="2.2" height="12.5" fill="#00f000"/>
<rect x="525.16" y="161.1" width="2.2" height="12.5" fill="#00f000"/>
<rect x="528.50" y="155.6" width="2.2" height="12.5" fill="#00f000"/>
<rect x="531.83" y="148.9" width="2.2" height="12.5" fill="#00f000"/>
<rect x="535.16" y="143.1" width="2.2" height="12.5" fill="#00f000"/>
<rect x="538.50" y="136.9" width="2.2" height="12.5" fill="#00f000"/>
<rect x="541.83" y="143.1" width="2.2" height="12.5" fill="#00f000"/>
<rect x="545.16" y="148.9" width="2.2" height="12.5" fill="#00f000"/>
<rect x="548.50" y="155.0" width="2.2" height="12.5" fill="#00f000"/>
<rect x="551.83" y="148.9" width="2.2" height="12.5" fill="#00f000"/>
<rect x="555.16" y="143.1" width="2.2" height="12.5" fill="#00f000"/>
<rect x="559.30" y="149.40" width="0.6" height="6.60" fill="#008a00"/>
<rect x="558.50" y="136.9" width="2.2" height="12.5" fill="#00f000"/>
<rect x="561.83" y="130.9" width="2.2" height="12.5" fill="#00f000"/>
<rect x="565.96" y="126" width="0.6" height="4.90" fill="#008a00"/>
<rect x="565.96" y="136.90" width="0.6" height="10.10" fill="#008a00"/>
<rect x="565.16" y="130.9" width="2.2" height="6" fill="#00f000"/>
<rect x="568.50" y="135.8" width="2.2" height="12.5" fill="#00f000"/>
<rect x="571.83" y="142.2" width="2.2" height="12.5" fill="#00f000"/>
<rect x="575.96" y="148.10" width="0.6" height="11.90" fill="#008a00"/>
<rect x="575.16" y="135.6" width="2.2" height="12.5" fill="#00f000"/>
<rect x="578.50" y="128.9" width="2.2" height="12.5" fill="#00f000"/>
<rect x="582.63" y="119" width="0.6" height="4.30" fill="#008a00"/>
<rect x="581.83" y="123.3" width="2.2" height="12.5" fill="#00f000"/>
<rect x="585.16" y="128.9" width="2.2" height="12.5" fill="#00f000"/>
<rect x="588.49" y="135.6" width="2.2" height="12.5" fill="#00f000"/>
<rect x="591.83" y="142.2" width="2.2" height="12.5" fill="#00f000"/>
<rect x="595.16" y="147.8" width="2.2" height="12.5" fill="#00f000"/>
<rect x="598.49" y="154.4" width="2.2" height="12.5" fill="#ff0000"/>
<rect x="601.83" y="160.3" width="2.2" height="12.5" fill="#ff0000"/>
<rect x="605.16" y="166.7" width="2.2" height="12.5" fill="#ff0000"/>
<rect x="608.49" y="173.1" width="2.2" height="12.5" fill="#ff0000"/>
<rect x="611.83" y="179.1" width="2.2" height="12.5" fill="#ff0000"/>
<rect x="615.96" y="185.60" width="0.6" height="10.40" fill="#900000"/>
<rect x="615.16" y="173.1" width="2.2" height="12.5" fill="#ff0000"/>
<rect x="618.49" y="166.7" width="2.2" height="12.5" fill="#ff0000"/>
<rect x="621.83" y="160.3" width="2.2" height="12.5" fill="#00f000"/>
<rect x="625.96" y="158.7" width="0.6" height="8.00" fill="#900000"/>
<rect x="625.16" y="166.7" width="2.2" height="12.5" fill="#ff0000"/>
<rect x="628.49" y="173.1" width="2.2" height="12.5" fill="#ff0000"/>
<rect x="632.63" y="179.20" width="0.6" height="8.80" fill="#008a00"/>
<rect x="631.83" y="166.7" width="2.2" height="12.5" fill="#00f000"/>
<rect x="635.96" y="161.3" width="0.6" height="5.40" fill="#900000"/>
<rect x="635.96" y="173.70" width="0.6" height="2.30" fill="#900000"/>
<rect x="635.16" y="166.7" width="2.2" height="7" fill="#ff0000"/>
</g>
<path d="M80.8 45 l1.8 0 l-0.9 1.2 z" fill="#ddd"/>
<text x="85.36" y="47.2" font-size="4.0" fill="#f2f2f2" text-anchor="start" font-weight="normal" style="font-family:'Liberation Sans', sans-serif" stroke="#f2f2f2" stroke-width="0.1" transform="skewX(0.05)" >AUDCAD,M3  0.89081 0.89427 0.89309 0.89329</text>
<text x="87.25" y="56.5" font-size="5.6" fill="#8a929c" text-anchor="start" font-weight="normal" style="font-family:'Liberation Sans', sans-serif" stroke="#8a929c" stroke-width="0.07" transform="skewX(0.05)" >Label</text>
<text x="103.75" y="56.5" font-size="5.6" fill="#e08a10" text-anchor="start" font-weight="normal" style="font-family:'Liberation Sans', sans-serif" stroke="#e08a10" stroke-width="0.07" transform="skewX(0.05)" >Trend</text>
<text x="123.55" y="56.5" font-size="5.6" fill="#e08a10" text-anchor="start" font-weight="normal" style="font-family:'Liberation Sans', sans-serif" stroke="#e08a10" stroke-width="0.07" transform="skewX(0.05)" >+</text>
<path d="M95 59.2 H128" stroke="#c87810" stroke-width="0.9" stroke-dasharray="0.55 0.55"/>
<text x="94.94" y="66.6" font-size="5.3" fill="#10c010" text-anchor="start" font-weight="normal" style="font-family:'Liberation Sans', sans-serif" stroke="#10c010" stroke-width="0.07" transform="skewX(0.05)" >UP</text>
<text x="114.14" y="66.7" font-size="5.7" fill="#e08a10" text-anchor="start" font-weight="normal" style="font-family:'Liberation Sans', sans-serif" stroke="#e08a10" stroke-width="0.07" transform="skewX(0.05)" >34%</text>
<text x="95.33" y="75.1" font-size="5.3" fill="#d01010" text-anchor="start" font-weight="normal" style="font-family:'Liberation Sans', sans-serif" stroke="#d01010" stroke-width="0.07" transform="skewX(0.05)" >DOWN</text>
<text x="114.33" y="75.2" font-size="5.7" fill="#e08a10" text-anchor="start" font-weight="normal" style="font-family:'Liberation Sans', sans-serif" stroke="#e08a10" stroke-width="0.07" transform="skewX(0.05)" >66%</text>
<path d="M95 80 H128" stroke="#c01010" stroke-width="0.9" stroke-dasharray="0.55 0.55"/>
<text x="99" y="92.6" font-size="10.8" fill="#ff1010" stroke="#ff1010" stroke-width="0.55" font-weight="bold" style="font-family:'Liberation Sans', sans-serif" textLength="25" lengthAdjust="spacingAndGlyphs" transform="skewX(0.05)">DOWN</text>
<text x="111.31" y="100.2" font-size="6.0" fill="#b88a18" text-anchor="middle" font-weight="normal" style="font-family:'Liberation Sans', sans-serif" stroke="#b88a18" stroke-width="0.07" transform="skewX(0.05)" >[weak]</text>
<path d="M95 105.6 H128" stroke="#c01010" stroke-width="0.9" stroke-dasharray="0.55 0.55"/>
<text x="80.2" y="165.5" font-size="7.4" fill="#d4d8de" style="font-family:'Liberation Sans', sans-serif" textLength="91.5" lengthAdjust="spacingAndGlyphs">www.FxMt4Indicators.com</text>
<text x="89.6" y="172" font-size="3.6" fill="#d8d8d8" style="font-family:'Liberation Sans', sans-serif" textLength="66" lengthAdjust="spacingAndGlyphs">Learn Here And Earn Everywhere</text>
<rect x="780.3" y="52.15" width="1.3" height="0.5" fill="#ccc"/>
<text x="782.25" y="53.85" font-size="3.9" fill="#eeeeee" text-anchor="start" font-weight="normal" style="font-family:'Liberation Sans', sans-serif" stroke="#eeeeee" stroke-width="0.05" transform="skewX(0.05)" >0.90300</text>
<rect x="780.3" y="66.02" width="1.3" height="0.5" fill="#ccc"/>
<text x="782.24" y="67.72" font-size="3.9" fill="#eeeeee" text-anchor="start" font-weight="normal" style="font-family:'Liberation Sans', sans-serif" stroke="#eeeeee" stroke-width="0.05" transform="skewX(0.05)" >0.90190</text>
<rect x="780.3" y="79.89" width="1.3" height="0.5" fill="#ccc"/>
<text x="782.23" y="81.59" font-size="3.9" fill="#eeeeee" text-anchor="start" font-weight="normal" style="font-family:'Liberation Sans', sans-serif" stroke="#eeeeee" stroke-width="0.05" transform="skewX(0.05)" >0.90075</text>
<rect x="780.3" y="93.76" width="1.3" height="0.5" fill="#ccc"/>
<text x="782.22" y="95.46" font-size="3.9" fill="#eeeeee" text-anchor="start" font-weight="normal" style="font-family:'Liberation Sans', sans-serif" stroke="#eeeeee" stroke-width="0.05" transform="skewX(0.05)" >0.89965</text>
<rect x="780.3" y="107.63" width="1.3" height="0.5" fill="#ccc"/>
<text x="782.20" y="109.33" font-size="3.9" fill="#eeeeee" text-anchor="start" font-weight="normal" style="font-family:'Liberation Sans', sans-serif" stroke="#eeeeee" stroke-width="0.05" transform="skewX(0.05)" >0.89855</text>
<rect x="780.3" y="121.50" width="1.3" height="0.5" fill="#ccc"/>
<text x="782.19" y="123.2" font-size="3.9" fill="#eeeeee" text-anchor="start" font-weight="normal" style="font-family:'Liberation Sans', sans-serif" stroke="#eeeeee" stroke-width="0.05" transform="skewX(0.05)" >0.89740</text>
<rect x="780.3" y="135.37" width="1.3" height="0.5" fill="#ccc"/>
<text x="782.18" y="137.07" font-size="3.9" fill="#eeeeee" text-anchor="start" font-weight="normal" style="font-family:'Liberation Sans', sans-serif" stroke="#eeeeee" stroke-width="0.05" transform="skewX(0.05)" >0.89630</text>
<rect x="780.3" y="149.24" width="1.3" height="0.5" fill="#ccc"/>
<text x="782.17" y="150.93999999999997" font-size="3.9" fill="#eeeeee" text-anchor="start" font-weight="normal" style="font-family:'Liberation Sans', sans-serif" stroke="#eeeeee" stroke-width="0.05" transform="skewX(0.05)" >0.89515</text>
<rect x="780.3" y="163.11" width="1.3" height="0.5" fill="#ccc"/>
<text x="782.16" y="164.80999999999997" font-size="3.9" fill="#eeeeee" text-anchor="start" font-weight="normal" style="font-family:'Liberation Sans', sans-serif" stroke="#eeeeee" stroke-width="0.05" transform="skewX(0.05)" >0.89405</text>
<rect x="780.3" y="176.98" width="1.3" height="0.5" fill="#ccc"/>
<text x="782.14" y="178.67999999999998" font-size="3.9" fill="#eeeeee" text-anchor="start" font-weight="normal" style="font-family:'Liberation Sans', sans-serif" stroke="#eeeeee" stroke-width="0.05" transform="skewX(0.05)" >0.89295</text>
<rect x="780.3" y="190.85" width="1.3" height="0.5" fill="#ccc"/>
<text x="782.13" y="192.54999999999998" font-size="3.9" fill="#eeeeee" text-anchor="start" font-weight="normal" style="font-family:'Liberation Sans', sans-serif" stroke="#eeeeee" stroke-width="0.05" transform="skewX(0.05)" >0.89180</text>
<rect x="780.3" y="204.72" width="1.3" height="0.5" fill="#ccc"/>
<text x="782.12" y="206.42" font-size="3.9" fill="#eeeeee" text-anchor="start" font-weight="normal" style="font-family:'Liberation Sans', sans-serif" stroke="#eeeeee" stroke-width="0.05" transform="skewX(0.05)" >0.89070</text>
<rect x="780.3" y="218.59" width="1.3" height="0.5" fill="#ccc"/>
<text x="782.11" y="220.29" font-size="3.9" fill="#eeeeee" text-anchor="start" font-weight="normal" style="font-family:'Liberation Sans', sans-serif" stroke="#eeeeee" stroke-width="0.05" transform="skewX(0.05)" >0.88960</text>
<rect x="780.3" y="232.46" width="1.3" height="0.5" fill="#ccc"/>
<text x="782.10" y="234.16" font-size="3.9" fill="#eeeeee" text-anchor="start" font-weight="normal" style="font-family:'Liberation Sans', sans-serif" stroke="#eeeeee" stroke-width="0.05" transform="skewX(0.05)" >0.88850</text>
<rect x="780.3" y="246.33" width="1.3" height="0.5" fill="#ccc"/>
<text x="782.08" y="248.02999999999997" font-size="3.9" fill="#eeeeee" text-anchor="start" font-weight="normal" style="font-family:'Liberation Sans', sans-serif" stroke="#eeeeee" stroke-width="0.05" transform="skewX(0.05)" >0.88740</text>
<rect x="781" y="171.3" width="16.7" height="4.4" fill="#ffffff"/>
<text x="782.15" y="175" font-size="3.9" fill="#000" text-anchor="start" font-weight="normal" style="font-family:'Liberation Sans', sans-serif" stroke="#000" stroke-width="0.05" transform="skewX(0.05)" >0.89329</text>
<g clip-path="url(#sub1clip)">
<rect x="79.7" y="283.15" width="700.3" height="0.7" fill="#b8900a"/>
<rect x="78.90" y="283.85" width="1.4" height="9.29" fill="#ff0000"/>
<rect x="82.23" y="283.85" width="1.4" height="13.07" fill="#ff0000"/>
<rect x="85.57" y="283.85" width="1.4" height="16.80" fill="#ff0000"/>
<rect x="88.90" y="283.85" width="1.4" height="20.49" fill="#ff0000"/>
<rect x="92.23" y="283.85" width="1.4" height="23.84" fill="#ff0000"/>
<rect x="95.57" y="283.85" width="1.4" height="26.88" fill="#ff0000"/>
<rect x="98.90" y="283.85" width="1.4" height="29.67" fill="#ff0000"/>
<rect x="102.23" y="283.85" width="1.4" height="32.21" fill="#ff0000"/>
<rect x="105.57" y="283.85" width="1.4" height="34.20" fill="#ff0000"/>
<rect x="108.90" y="283.85" width="1.4" height="35.59" fill="#ff0000"/>
<rect x="112.23" y="283.85" width="1.4" height="36.58" fill="#ff0000"/>
<rect x="115.57" y="283.85" width="1.4" height="37.20" fill="#ff0000"/>
<rect x="118.90" y="283.85" width="1.4" height="37.81" fill="#ff0000"/>
<rect x="122.23" y="283.85" width="1.4" height="37.43" fill="#ff0000"/>
<rect x="125.57" y="283.85" width="1.4" height="33.93" fill="#ff0000"/>
<rect x="128.90" y="283.85" width="1.4" height="30.17" fill="#ff0000"/>
<rect x="132.23" y="283.85" width="1.4" height="26.14" fill="#ff0000"/>
<rect x="135.57" y="283.85" width="1.4" height="20.81" fill="#ff0000"/>
<rect x="138.90" y="283.85" width="1.4" height="14.16" fill="#ff0000"/>
<rect x="142.23" y="283.85" width="1.4" height="7.10" fill="#ff0000"/>
<rect x="145.57" y="283.19" width="1.4" height="-0.04" fill="#00f000"/>
<rect x="148.90" y="275.61" width="1.4" height="7.54" fill="#00f000"/>
<rect x="152.23" y="269.20" width="1.4" height="13.95" fill="#00f000"/>
<rect x="155.57" y="263.62" width="1.4" height="19.53" fill="#00f000"/>
<rect x="158.90" y="259.07" width="1.4" height="24.08" fill="#00f000"/>
<rect x="162.23" y="255.77" width="1.4" height="27.38" fill="#00f000"/>
<rect x="165.57" y="253.71" width="1.4" height="29.44" fill="#00f000"/>
<rect x="168.90" y="254.32" width="1.4" height="28.83" fill="#00f000"/>
<rect x="172.23" y="254.64" width="1.4" height="28.51" fill="#00f000"/>
<rect x="175.57" y="254.84" width="1.4" height="28.31" fill="#00f000"/>
<rect x="178.90" y="255.21" width="1.4" height="27.94" fill="#00f000"/>
<rect x="182.23" y="256.06" width="1.4" height="27.09" fill="#00f000"/>
<rect x="185.57" y="257.70" width="1.4" height="25.45" fill="#00f000"/>
<rect x="188.90" y="260.18" width="1.4" height="22.97" fill="#00f000"/>
<rect x="192.23" y="263.25" width="1.4" height="19.90" fill="#00f000"/>
<rect x="195.57" y="267.48" width="1.4" height="15.67" fill="#00f000"/>
<rect x="198.90" y="271.78" width="1.4" height="11.37" fill="#00f000"/>
<rect x="202.23" y="274.91" width="1.4" height="8.24" fill="#00f000"/>
<rect x="205.57" y="275.64" width="1.4" height="7.51" fill="#00f000"/>
<rect x="208.90" y="274.17" width="1.4" height="8.98" fill="#00f000"/>
<rect x="212.23" y="271.55" width="1.4" height="11.60" fill="#00f000"/>
<rect x="215.57" y="268.85" width="1.4" height="14.30" fill="#00f000"/>
<rect x="218.90" y="266.39" width="1.4" height="16.76" fill="#00f000"/>
<rect x="222.23" y="263.59" width="1.4" height="19.56" fill="#00f000"/>
<rect x="225.57" y="260.94" width="1.4" height="22.21" fill="#00f000"/>
<rect x="228.90" y="259.03" width="1.4" height="24.12" fill="#00f000"/>
<rect x="232.23" y="258.18" width="1.4" height="24.97" fill="#00f000"/>
<rect x="235.57" y="258.00" width="1.4" height="25.15" fill="#00f000"/>
<rect x="238.90" y="257.87" width="1.4" height="25.28" fill="#00f000"/>
<rect x="242.23" y="257.19" width="1.4" height="25.96" fill="#00f000"/>
<rect x="245.56" y="255.71" width="1.4" height="27.44" fill="#00f000"/>
<rect x="248.90" y="254.07" width="1.4" height="29.08" fill="#00f000"/>
<rect x="252.23" y="252.96" width="1.4" height="30.19" fill="#00f000"/>
<rect x="255.56" y="252.92" width="1.4" height="30.23" fill="#00f000"/>
<rect x="258.90" y="253.65" width="1.4" height="29.50" fill="#00f000"/>
<rect x="262.23" y="254.99" width="1.4" height="28.16" fill="#00f000"/>
<rect x="265.56" y="257.03" width="1.4" height="26.12" fill="#00f000"/>
<rect x="268.90" y="260.19" width="1.4" height="22.96" fill="#00f000"/>
<rect x="272.23" y="264.88" width="1.4" height="18.27" fill="#00f000"/>
<rect x="275.56" y="270.10" width="1.4" height="13.05" fill="#00f000"/>
<rect x="278.90" y="275.49" width="1.4" height="7.66" fill="#00f000"/>
<rect x="282.23" y="281.19" width="1.4" height="1.96" fill="#00f000"/>
<rect x="285.56" y="283.85" width="1.4" height="2.80" fill="#ff0000"/>
<rect x="288.90" y="283.85" width="1.4" height="8.10" fill="#ff0000"/>
<rect x="292.23" y="283.85" width="1.4" height="13.07" fill="#ff0000"/>
<rect x="295.56" y="283.85" width="1.4" height="17.49" fill="#ff0000"/>
<rect x="298.90" y="283.85" width="1.4" height="21.80" fill="#ff0000"/>
<rect x="302.23" y="283.85" width="1.4" height="25.72" fill="#ff0000"/>
<rect x="305.56" y="283.85" width="1.4" height="28.93" fill="#ff0000"/>
<rect x="308.90" y="283.85" width="1.4" height="31.32" fill="#ff0000"/>
<rect x="312.23" y="283.85" width="1.4" height="33.16" fill="#ff0000"/>
<rect x="315.56" y="283.85" width="1.4" height="34.49" fill="#ff0000"/>
<rect x="318.90" y="283.85" width="1.4" height="35.44" fill="#ff0000"/>
<rect x="322.23" y="283.85" width="1.4" height="36.14" fill="#ff0000"/>
<rect x="325.56" y="283.85" width="1.4" height="36.66" fill="#ff0000"/>
<rect x="328.90" y="283.85" width="1.4" height="37.07" fill="#ff0000"/>
<rect x="332.23" y="283.85" width="1.4" height="37.38" fill="#ff0000"/>
<rect x="335.56" y="283.85" width="1.4" height="37.61" fill="#ff0000"/>
<rect x="338.90" y="283.85" width="1.4" height="37.72" fill="#ff0000"/>
<rect x="342.23" y="283.85" width="1.4" height="37.70" fill="#ff0000"/>
<rect x="345.56" y="283.85" width="1.4" height="37.44" fill="#ff0000"/>
<rect x="348.90" y="283.85" width="1.4" height="36.70" fill="#ff0000"/>
<rect x="352.23" y="283.85" width="1.4" height="34.87" fill="#ff0000"/>
<rect x="355.56" y="283.85" width="1.4" height="30.33" fill="#ff0000"/>
<rect x="358.90" y="283.85" width="1.4" height="24.31" fill="#ff0000"/>
<rect x="362.23" y="283.85" width="1.4" height="16.15" fill="#ff0000"/>
<rect x="365.56" y="283.85" width="1.4" height="9.09" fill="#ff0000"/>
<rect x="368.90" y="283.85" width="1.4" height="4.65" fill="#ff0000"/>
<rect x="372.23" y="283.85" width="1.4" height="1.44" fill="#ff0000"/>
<rect x="375.56" y="282.40" width="1.4" height="0.75" fill="#00f000"/>
<rect x="378.90" y="279.18" width="1.4" height="3.97" fill="#00f000"/>
<rect x="382.23" y="275.03" width="1.4" height="8.12" fill="#00f000"/>
<rect x="385.56" y="270.54" width="1.4" height="12.61" fill="#00f000"/>
<rect x="388.90" y="266.77" width="1.4" height="16.38" fill="#00f000"/>
<rect x="392.23" y="265.17" width="1.4" height="17.98" fill="#00f000"/>
<rect x="395.56" y="266.81" width="1.4" height="16.34" fill="#00f000"/>
<rect x="398.90" y="270.86" width="1.4" height="12.29" fill="#00f000"/>
<rect x="402.23" y="275.70" width="1.4" height="7.45" fill="#00f000"/>
<rect x="405.56" y="282.34" width="1.4" height="0.81" fill="#00f000"/>
<rect x="408.90" y="283.85" width="1.4" height="4.33" fill="#ff0000"/>
<rect x="412.23" y="283.85" width="1.4" height="8.33" fill="#ff0000"/>
<rect x="415.56" y="283.85" width="1.4" height="11.62" fill="#ff0000"/>
<rect x="418.90" y="283.85" width="1.4" height="14.68" fill="#ff0000"/>
<rect x="422.23" y="283.85" width="1.4" height="17.84" fill="#ff0000"/>
<rect x="425.56" y="283.85" width="1.4" height="21.54" fill="#ff0000"/>
<rect x="428.90" y="283.85" width="1.4" height="25.23" fill="#ff0000"/>
<rect x="432.23" y="283.85" width="1.4" height="27.61" fill="#ff0000"/>
<rect x="435.56" y="283.85" width="1.4" height="27.14" fill="#ff0000"/>
<rect x="438.90" y="283.85" width="1.4" height="23.26" fill="#ff0000"/>
<rect x="442.23" y="283.85" width="1.4" height="17.14" fill="#ff0000"/>
<rect x="445.56" y="283.85" width="1.4" height="8.69" fill="#ff0000"/>
<rect x="448.90" y="283.85" width="1.4" height="0.60" fill="#ff0000"/>
<rect x="452.23" y="278.66" width="1.4" height="4.49" fill="#00f000"/>
<rect x="455.56" y="274.40" width="1.4" height="8.75" fill="#00f000"/>
<rect x="458.90" y="271.82" width="1.4" height="11.33" fill="#00f000"/>
<rect x="462.23" y="270.66" width="1.4" height="12.49" fill="#00f000"/>
<rect x="465.56" y="270.43" width="1.4" height="12.72" fill="#00f000"/>
<rect x="468.90" y="270.81" width="1.4" height="12.34" fill="#00f000"/>
<rect x="472.23" y="271.77" width="1.4" height="11.38" fill="#00f000"/>
<rect x="475.56" y="273.76" width="1.4" height="9.39" fill="#00f000"/>
<rect x="478.90" y="276.91" width="1.4" height="6.24" fill="#00f000"/>
<rect x="482.23" y="280.69" width="1.4" height="2.46" fill="#00f000"/>
<rect x="485.56" y="283.85" width="1.4" height="2.25" fill="#ff0000"/>
<rect x="488.90" y="283.85" width="1.4" height="6.99" fill="#ff0000"/>
<rect x="492.23" y="283.85" width="1.4" height="7.89" fill="#ff0000"/>
<rect x="495.56" y="283.85" width="1.4" height="5.18" fill="#ff0000"/>
<rect x="498.90" y="283.85" width="1.4" height="1.24" fill="#ff0000"/>
<rect x="502.23" y="281.27" width="1.4" height="1.88" fill="#00f000"/>
<rect x="505.56" y="276.85" width="1.4" height="6.30" fill="#00f000"/>
<rect x="508.90" y="273.42" width="1.4" height="9.73" fill="#00f000"/>
<rect x="512.23" y="271.58" width="1.4" height="11.57" fill="#00f000"/>
<rect x="515.56" y="270.55" width="1.4" height="12.60" fill="#00f000"/>
<rect x="518.90" y="269.62" width="1.4" height="13.53" fill="#00f000"/>
<rect x="522.23" y="268.13" width="1.4" height="15.02" fill="#00f000"/>
<rect x="525.56" y="265.55" width="1.4" height="17.60" fill="#00f000"/>
<rect x="528.90" y="262.43" width="1.4" height="20.72" fill="#00f000"/>
<rect x="532.23" y="259.92" width="1.4" height="23.23" fill="#00f000"/>
<rect x="535.56" y="257.82" width="1.4" height="25.33" fill="#00f000"/>
<rect x="538.90" y="256.28" width="1.4" height="26.87" fill="#00f000"/>
<rect x="542.23" y="256.45" width="1.4" height="26.70" fill="#00f000"/>
<rect x="545.56" y="259.58" width="1.4" height="23.57" fill="#00f000"/>
<rect x="548.90" y="262.12" width="1.4" height="21.03" fill="#00f000"/>
<rect x="552.23" y="264.52" width="1.4" height="18.63" fill="#00f000"/>
<rect x="555.56" y="266.56" width="1.4" height="16.59" fill="#00f000"/>
<rect x="558.90" y="268.08" width="1.4" height="15.07" fill="#00f000"/>
<rect x="562.23" y="269.28" width="1.4" height="13.87" fill="#00f000"/>
<rect x="565.56" y="270.41" width="1.4" height="12.74" fill="#00f000"/>
<rect x="568.90" y="271.69" width="1.4" height="11.46" fill="#00f000"/>
<rect x="572.23" y="273.49" width="1.4" height="9.66" fill="#00f000"/>
<rect x="575.56" y="275.41" width="1.4" height="7.74" fill="#00f000"/>
<rect x="578.89" y="276.30" width="1.4" height="6.85" fill="#00f000"/>
<rect x="582.23" y="275.38" width="1.4" height="7.77" fill="#00f000"/>
<rect x="585.56" y="274.43" width="1.4" height="8.72" fill="#00f000"/>
<rect x="588.89" y="275.54" width="1.4" height="7.61" fill="#00f000"/>
<rect x="592.23" y="278.61" width="1.4" height="4.54" fill="#00f000"/>
<rect x="595.56" y="282.53" width="1.4" height="0.62" fill="#00f000"/>
<rect x="598.89" y="283.85" width="1.4" height="2.80" fill="#ff0000"/>
<rect x="602.23" y="283.85" width="1.4" height="7.48" fill="#ff0000"/>
<rect x="605.56" y="283.85" width="1.4" height="11.98" fill="#ff0000"/>
<rect x="608.89" y="283.85" width="1.4" height="16.20" fill="#ff0000"/>
<rect x="612.23" y="283.85" width="1.4" height="20.21" fill="#ff0000"/>
<rect x="615.56" y="283.85" width="1.4" height="22.15" fill="#ff0000"/>
<rect x="618.89" y="283.85" width="1.4" height="20.48" fill="#ff0000"/>
<rect x="622.23" y="283.85" width="1.4" height="16.80" fill="#ff0000"/>
<rect x="625.56" y="283.85" width="1.4" height="13.78" fill="#ff0000"/>
<rect x="628.89" y="283.85" width="1.4" height="11.61" fill="#ff0000"/>
<rect x="632.23" y="283.85" width="1.4" height="9.59" fill="#ff0000"/>
<rect x="635.56" y="283.85" width="1.4" height="7.61" fill="#ff0000"/>
<path d="M79.30,292.80 C80.20,293.82 82.70,296.68 84.70,298.90 C86.70,301.12 89.08,303.88 91.30,306.10 C93.52,308.32 95.77,310.35 98.00,312.20 C100.23,314.05 102.48,315.90 104.70,317.20 C106.92,318.50 109.08,319.32 111.30,320.00 C113.52,320.68 116.15,321.03 118.00,321.30 C119.85,321.57 120.88,322.35 122.40,321.60 C123.92,320.85 125.05,319.17 127.10,316.80 C129.15,314.43 132.17,311.48 134.70,307.40 C137.23,303.32 140.42,296.23 142.30,292.30 C144.18,288.37 144.75,286.65 146.00,283.80 C147.25,280.95 148.22,278.37 149.80,275.20 C151.38,272.03 153.60,267.78 155.50,264.80 C157.40,261.82 159.32,259.18 161.20,257.30 C163.08,255.42 165.33,253.98 166.80,253.50 C168.27,253.02 167.38,254.00 170.00,254.40 C172.62,254.80 178.85,254.60 182.50,255.90 C186.15,257.20 188.25,258.92 191.90,262.20 C195.55,265.48 200.23,274.57 204.40,275.60 C208.57,276.63 212.73,271.15 216.90,268.40 C221.07,265.65 225.23,260.92 229.40,259.10 C233.57,257.28 237.73,258.55 241.90,257.50 C246.07,256.45 250.23,252.80 254.40,252.80 C258.57,252.80 263.27,254.63 266.90,257.50 C270.53,260.37 273.08,265.32 276.20,270.00 C279.32,274.68 282.47,280.65 285.60,285.60 C288.73,290.55 291.35,295.01 295.00,299.70 C298.65,304.39 302.83,310.37 307.50,313.75 C312.17,317.13 316.25,318.79 323.00,320.00 C329.75,321.21 342.25,322.30 348.00,321.00 C353.75,319.70 354.35,317.05 357.50,312.20 C360.65,307.35 363.25,297.37 366.90,291.90 C370.55,286.43 375.23,283.83 379.40,279.40 C383.57,274.97 388.26,266.35 391.90,265.30 C395.54,264.25 398.23,269.19 401.25,273.10 C404.27,277.01 406.46,284.06 410.00,288.75 C413.54,293.44 418.60,297.44 422.50,301.25 C426.40,305.06 430.27,311.08 433.40,311.60 C436.52,312.12 438.38,309.25 441.25,304.40 C444.12,299.55 447.48,287.97 450.60,282.50 C453.73,277.03 456.35,273.42 460.00,271.60 C463.65,269.78 468.85,270.30 472.50,271.60 C476.15,272.90 478.77,276.02 481.90,279.40 C485.02,282.78 488.13,291.13 491.25,291.90 C494.37,292.67 497.48,287.13 500.60,284.00 C503.73,280.87 506.35,275.70 510.00,273.10 C513.65,270.50 518.85,270.48 522.50,268.40 C526.15,266.32 528.77,262.67 531.90,260.60 C535.02,258.53 538.65,256.00 541.25,256.00 C543.85,256.00 544.89,258.78 547.50,260.60 C550.11,262.42 553.25,265.07 556.90,266.90 C560.55,268.73 565.76,270.04 569.40,271.60 C573.04,273.16 575.63,275.73 578.75,276.25 C581.87,276.77 584.98,273.41 588.10,274.70 C591.23,275.99 594.37,280.35 597.50,284.00 C600.63,287.65 603.77,292.93 606.90,296.60 C610.02,300.27 613.13,305.75 616.25,306.00 C619.37,306.25 622.21,300.56 625.60,298.10 C628.99,295.64 634.77,292.39 636.60,291.25" fill="none" stroke="#1010e0" stroke-width="1.25" stroke-linecap="round"/>
<polyline points="79.3,283.9 84.7,290.6 91.3,298.3 98.0,303.9 104.7,308.3 111.3,310.6 118.0,311.2 129.0,311.2 132.8,319.7 140.4,307.4 149.8,283.8 157.4,272.4 165.0,263.9 191.9,264.4 195.0,257.5 204.4,265.3 220.0,265.3 223.0,273.1 229.4,267.5 241.9,267.5 257.5,260.6 265.3,260.6 270.0,253.8 279.4,265.3 288.8,282.5 301.2,298.1 313.8,307.5 326.2,312.2 351.2,313.8 356.0,318.4 365.3,298.1 376.2,288.8 388.8,273.1 401.2,269.4 410.6,282.5 422.5,291.9 433.4,301.2 439.7,301.9 442.8,310.6 456.9,281.9 480.3,281.9 483.4,273.1 491.2,281.9 502.2,281.9 505.3,286.6 519.4,279.4 538.1,263.8 547.5,263.8 550.0,256.6 556.9,262.8 572.5,262.8 578.8,267.5 589.7,267.5 597.5,279.4 610.0,298.8 622.5,298.8 627.2,305.0 635.6,299.7" fill="none" stroke="#f4f4f4" stroke-width="1.0" stroke-linejoin="round" stroke-linecap="round" />
</g>
<text x="80.88" y="254.3" font-size="3.9" fill="#dcdcdc" text-anchor="start" font-weight="normal" style="font-family:'Liberation Sans', sans-serif" stroke="#dcdcdc" stroke-width="0.1" transform="skewX(0.05)" >Ultimate Trend Following Filter -0.0001 -0.0001 -0.0002</text>
<text x="782.08" y="253.6" font-size="3.9" fill="#eeeeee" text-anchor="start" font-weight="normal" style="font-family:'Liberation Sans', sans-serif" stroke="#eeeeee" stroke-width="0.05" transform="skewX(0.05)" >0.0004</text>
<text x="782.05" y="284.8" font-size="3.9" fill="#eeeeee" text-anchor="start" font-weight="normal" style="font-family:'Liberation Sans', sans-serif" stroke="#eeeeee" stroke-width="0.05" transform="skewX(0.05)" >0.00</text>
<text x="782.02" y="323.4" font-size="3.9" fill="#eeeeee" text-anchor="start" font-weight="normal" style="font-family:'Liberation Sans', sans-serif" stroke="#eeeeee" stroke-width="0.05" transform="skewX(0.05)" >-0.0006</text>
<rect x="780.3" y="283.3" width="1.3" height="0.5" fill="#ccc"/>
<g clip-path="url(#sub2clip)">
<rect x="78.55" y="370.30" width="2.1" height="7.95" fill="#ff0000"/>
<rect x="81.88" y="370.30" width="2.1" height="7.95" fill="#ff0000"/>
<rect x="85.22" y="370.30" width="2.1" height="7.95" fill="#ff0000"/>
<rect x="88.55" y="370.30" width="2.1" height="7.95" fill="#ff0000"/>
<rect x="91.88" y="370.30" width="2.1" height="10.42" fill="#ff0000"/>
<rect x="95.22" y="370.30" width="2.1" height="10.42" fill="#ff0000"/>
<rect x="98.55" y="370.30" width="2.1" height="9.58" fill="#ff0000"/>
<rect x="101.88" y="370.30" width="2.1" height="9.21" fill="#ff0000"/>
<rect x="105.22" y="370.30" width="2.1" height="8.89" fill="#ff0000"/>
<rect x="108.55" y="370.30" width="2.1" height="9.01" fill="#ff0000"/>
<rect x="111.88" y="370.30" width="2.1" height="12.94" fill="#ff0000"/>
<rect x="115.22" y="370.30" width="2.1" height="16.52" fill="#ff0000"/>
<rect x="118.55" y="370.30" width="2.1" height="19.25" fill="#ff0000"/>
<rect x="121.88" y="370.30" width="2.1" height="20.41" fill="#ff0000"/>
<rect x="125.22" y="370.30" width="2.1" height="21.36" fill="#ff0000"/>
<rect x="128.55" y="370.30" width="2.1" height="22.00" fill="#ff0000"/>
<rect x="131.88" y="370.30" width="2.1" height="18.63" fill="#ff0000"/>
<rect x="135.22" y="370.30" width="2.1" height="15.31" fill="#ff0000"/>
<rect x="138.55" y="370.30" width="2.1" height="12.30" fill="#ff0000"/>
<rect x="141.88" y="370.30" width="2.1" height="10.63" fill="#ff0000"/>
<rect x="145.22" y="370.30" width="2.1" height="9.50" fill="#ff0000"/>
<rect x="148.55" y="370.30" width="2.1" height="9.50" fill="#ff0000"/>
<rect x="151.88" y="370.30" width="2.1" height="9.50" fill="#ff0000"/>
<rect x="155.22" y="370.30" width="2.1" height="8.20" fill="#ff0000"/>
<rect x="158.55" y="370.30" width="2.1" height="6.88" fill="#ff0000"/>
<rect x="161.88" y="370.30" width="2.1" height="7.25" fill="#ff0000"/>
<rect x="165.22" y="370.30" width="2.1" height="8.57" fill="#ff0000"/>
<rect x="168.55" y="370.30" width="2.1" height="9.75" fill="#ff0000"/>
<rect x="171.88" y="370.30" width="2.1" height="10.60" fill="#ff0000"/>
<rect x="175.22" y="370.30" width="2.1" height="10.87" fill="#ff0000"/>
<rect x="178.55" y="370.30" width="2.1" height="10.30" fill="#ff0000"/>
<rect x="181.88" y="370.30" width="2.1" height="9.73" fill="#ff0000"/>
<rect x="185.22" y="370.30" width="2.1" height="8.63" fill="#ff0000"/>
<rect x="188.55" y="370.30" width="2.1" height="7.18" fill="#ff0000"/>
<rect x="191.88" y="370.30" width="2.1" height="5.74" fill="#ff0000"/>
<rect x="195.22" y="370.30" width="2.1" height="4.39" fill="#ff0000"/>
<rect x="198.55" y="370.30" width="2.1" height="3.06" fill="#ff0000"/>
<rect x="201.88" y="370.30" width="2.1" height="1.73" fill="#ff0000"/>
<rect x="205.22" y="368.04" width="2.1" height="2.26" fill="#00f000"/>
<rect x="208.55" y="363.94" width="2.1" height="6.36" fill="#00f000"/>
<rect x="211.88" y="361.43" width="2.1" height="8.87" fill="#00f000"/>
<rect x="215.22" y="358.73" width="2.1" height="11.57" fill="#00f000"/>
<rect x="218.55" y="355.40" width="2.1" height="14.90" fill="#00f000"/>
<rect x="221.88" y="352.07" width="2.1" height="18.23" fill="#00f000"/>
<rect x="225.22" y="348.73" width="2.1" height="21.57" fill="#00f000"/>
<rect x="228.55" y="346.36" width="2.1" height="23.94" fill="#00f000"/>
<rect x="231.88" y="345.03" width="2.1" height="25.27" fill="#00f000"/>
<rect x="235.22" y="342.79" width="2.1" height="27.51" fill="#00f000"/>
<rect x="238.55" y="339.96" width="2.1" height="30.34" fill="#00f000"/>
<rect x="241.88" y="336.79" width="2.1" height="33.51" fill="#00f000"/>
<rect x="245.21" y="333.48" width="2.1" height="36.82" fill="#00f000"/>
<rect x="248.55" y="331.97" width="2.1" height="38.33" fill="#00f000"/>
<rect x="251.88" y="330.77" width="2.1" height="39.53" fill="#00f000"/>
<rect x="255.21" y="330.75" width="2.1" height="39.55" fill="#00f000"/>
<rect x="258.55" y="332.87" width="2.1" height="37.43" fill="#00f000"/>
<rect x="261.88" y="336.00" width="2.1" height="34.30" fill="#00f000"/>
<rect x="265.21" y="336.00" width="2.1" height="34.30" fill="#00f000"/>
<rect x="268.55" y="336.00" width="2.1" height="34.30" fill="#00f000"/>
<rect x="271.88" y="337.49" width="2.1" height="32.81" fill="#00f000"/>
<rect x="275.21" y="341.71" width="2.1" height="28.59" fill="#00f000"/>
<rect x="278.55" y="345.49" width="2.1" height="24.81" fill="#00f000"/>
<rect x="281.88" y="348.81" width="2.1" height="21.49" fill="#00f000"/>
<rect x="285.21" y="352.12" width="2.1" height="18.18" fill="#00f000"/>
<rect x="288.55" y="354.72" width="2.1" height="15.58" fill="#00f000"/>
<rect x="291.88" y="356.95" width="2.1" height="13.35" fill="#00f000"/>
<rect x="295.21" y="359.18" width="2.1" height="11.12" fill="#00f000"/>
<rect x="298.55" y="360.91" width="2.1" height="9.39" fill="#00f000"/>
<rect x="301.88" y="362.57" width="2.1" height="7.73" fill="#00f000"/>
<rect x="305.21" y="366.98" width="2.1" height="3.32" fill="#00f000"/>
<rect x="308.55" y="369.07" width="2.1" height="1.23" fill="#00f000"/>
<rect x="311.88" y="369.23" width="2.1" height="1.07" fill="#00f000"/>
<rect x="315.21" y="369.28" width="2.1" height="1.02" fill="#00f000"/>
<rect x="318.55" y="370.30" width="2.1" height="1.22" fill="#ff0000"/>
<rect x="321.88" y="370.30" width="2.1" height="4.20" fill="#ff0000"/>
<rect x="325.21" y="370.30" width="2.1" height="4.20" fill="#ff0000"/>
<rect x="328.55" y="370.30" width="2.1" height="6.08" fill="#ff0000"/>
<rect x="331.88" y="370.30" width="2.1" height="9.93" fill="#ff0000"/>
<rect x="335.21" y="370.30" width="2.1" height="13.23" fill="#ff0000"/>
<rect x="338.55" y="370.30" width="2.1" height="16.55" fill="#ff0000"/>
<rect x="341.88" y="370.30" width="2.1" height="19.91" fill="#ff0000"/>
<rect x="345.21" y="370.30" width="2.1" height="22.83" fill="#ff0000"/>
<rect x="348.55" y="370.30" width="2.1" height="25.03" fill="#ff0000"/>
<rect x="351.88" y="370.30" width="2.1" height="25.10" fill="#ff0000"/>
<rect x="355.21" y="370.30" width="2.1" height="23.90" fill="#ff0000"/>
<rect x="358.55" y="370.30" width="2.1" height="21.75" fill="#ff0000"/>
<rect x="361.88" y="370.30" width="2.1" height="23.17" fill="#ff0000"/>
<rect x="365.21" y="370.30" width="2.1" height="26.13" fill="#ff0000"/>
<rect x="368.55" y="370.30" width="2.1" height="27.40" fill="#ff0000"/>
<rect x="371.88" y="370.30" width="2.1" height="28.26" fill="#ff0000"/>
<rect x="375.21" y="370.30" width="2.1" height="27.76" fill="#ff0000"/>
<rect x="378.55" y="370.30" width="2.1" height="27.19" fill="#ff0000"/>
<rect x="381.88" y="370.30" width="2.1" height="26.38" fill="#ff0000"/>
<rect x="385.21" y="370.30" width="2.1" height="23.87" fill="#ff0000"/>
<rect x="388.55" y="370.30" width="2.1" height="22.85" fill="#ff0000"/>
<rect x="391.88" y="370.30" width="2.1" height="26.21" fill="#ff0000"/>
<rect x="395.21" y="370.30" width="2.1" height="28.30" fill="#ff0000"/>
<rect x="398.55" y="370.30" width="2.1" height="28.30" fill="#ff0000"/>
<rect x="401.88" y="370.30" width="2.1" height="28.30" fill="#ff0000"/>
<rect x="405.21" y="370.30" width="2.1" height="27.98" fill="#ff0000"/>
<rect x="408.55" y="370.30" width="2.1" height="27.41" fill="#ff0000"/>
<rect x="411.88" y="370.30" width="2.1" height="26.84" fill="#ff0000"/>
<rect x="415.21" y="370.30" width="2.1" height="26.06" fill="#ff0000"/>
<rect x="418.55" y="370.30" width="2.1" height="25.20" fill="#ff0000"/>
<rect x="421.88" y="370.30" width="2.1" height="25.33" fill="#ff0000"/>
<rect x="425.21" y="370.30" width="2.1" height="25.60" fill="#ff0000"/>
<rect x="428.55" y="370.30" width="2.1" height="25.87" fill="#ff0000"/>
<rect x="431.88" y="370.30" width="2.1" height="25.71" fill="#ff0000"/>
<rect x="435.21" y="370.30" width="2.1" height="22.70" fill="#ff0000"/>
<rect x="438.55" y="370.30" width="2.1" height="19.40" fill="#ff0000"/>
<rect x="441.88" y="370.30" width="2.1" height="15.27" fill="#ff0000"/>
<rect x="445.21" y="370.30" width="2.1" height="11.43" fill="#ff0000"/>
<rect x="448.55" y="370.30" width="2.1" height="8.07" fill="#ff0000"/>
<rect x="451.88" y="370.30" width="2.1" height="5.30" fill="#ff0000"/>
<rect x="455.21" y="370.30" width="2.1" height="3.11" fill="#ff0000"/>
<rect x="458.55" y="370.30" width="2.1" height="2.64" fill="#ff0000"/>
<rect x="461.88" y="370.30" width="2.1" height="3.17" fill="#ff0000"/>
<rect x="465.21" y="370.30" width="2.1" height="1.55" fill="#ff0000"/>
<rect x="468.55" y="367.83" width="2.1" height="2.47" fill="#00f000"/>
<rect x="471.88" y="367.30" width="2.1" height="3.00" fill="#00f000"/>
<rect x="475.21" y="368.91" width="2.1" height="1.39" fill="#00f000"/>
<rect x="478.55" y="370.30" width="2.1" height="1.90" fill="#ff0000"/>
<rect x="481.88" y="370.30" width="2.1" height="5.33" fill="#ff0000"/>
<rect x="485.21" y="370.30" width="2.1" height="8.60" fill="#ff0000"/>
<rect x="488.55" y="370.30" width="2.1" height="7.58" fill="#ff0000"/>
<rect x="491.88" y="370.30" width="2.1" height="3.27" fill="#ff0000"/>
<rect x="495.21" y="369.87" width="2.1" height="0.43" fill="#00f000"/>
<rect x="498.55" y="369.27" width="2.1" height="1.03" fill="#00f000"/>
<rect x="501.88" y="370.30" width="2.1" height="0.62" fill="#ff0000"/>
<rect x="505.21" y="370.30" width="2.1" height="2.63" fill="#ff0000"/>
<rect x="508.55" y="370.30" width="2.1" height="4.30" fill="#ff0000"/>
<rect x="511.88" y="370.30" width="2.1" height="5.12" fill="#ff0000"/>
<rect x="515.21" y="370.30" width="2.1" height="4.81" fill="#ff0000"/>
<rect x="518.55" y="370.30" width="2.1" height="2.57" fill="#ff0000"/>
<rect x="521.88" y="369.10" width="2.1" height="1.20" fill="#00f000"/>
<rect x="525.21" y="366.34" width="2.1" height="3.96" fill="#00f000"/>
<rect x="528.55" y="362.96" width="2.1" height="7.34" fill="#00f000"/>
<rect x="531.88" y="359.12" width="2.1" height="11.18" fill="#00f000"/>
<rect x="535.21" y="356.13" width="2.1" height="14.17" fill="#00f000"/>
<rect x="538.55" y="354.24" width="2.1" height="16.06" fill="#00f000"/>
<rect x="541.88" y="355.57" width="2.1" height="14.73" fill="#00f000"/>
<rect x="545.21" y="355.90" width="2.1" height="14.40" fill="#00f000"/>
<rect x="548.55" y="354.56" width="2.1" height="15.74" fill="#00f000"/>
<rect x="551.88" y="352.42" width="2.1" height="17.88" fill="#00f000"/>
<rect x="555.21" y="349.49" width="2.1" height="20.81" fill="#00f000"/>
<rect x="558.55" y="346.40" width="2.1" height="23.90" fill="#00f000"/>
<rect x="561.88" y="346.83" width="2.1" height="23.47" fill="#00f000"/>
<rect x="565.21" y="350.29" width="2.1" height="20.01" fill="#00f000"/>
<rect x="568.55" y="354.10" width="2.1" height="16.20" fill="#00f000"/>
<rect x="571.88" y="356.40" width="2.1" height="13.90" fill="#00f000"/>
<rect x="575.21" y="355.75" width="2.1" height="14.55" fill="#00f000"/>
<rect x="578.55" y="354.80" width="2.1" height="15.50" fill="#00f000"/>
<rect x="581.88" y="354.80" width="2.1" height="15.50" fill="#00f000"/>
<rect x="585.21" y="354.80" width="2.1" height="15.50" fill="#00f000"/>
<rect x="588.54" y="354.80" width="2.1" height="15.50" fill="#00f000"/>
<rect x="591.88" y="357.83" width="2.1" height="12.47" fill="#00f000"/>
<rect x="595.21" y="361.37" width="2.1" height="8.93" fill="#00f000"/>
<rect x="598.54" y="362.00" width="2.1" height="8.30" fill="#00f000"/>
<rect x="601.88" y="361.02" width="2.1" height="9.28" fill="#00f000"/>
<rect x="605.21" y="361.00" width="2.1" height="9.30" fill="#00f000"/>
<rect x="608.54" y="361.00" width="2.1" height="9.30" fill="#00f000"/>
<rect x="611.88" y="361.00" width="2.1" height="9.30" fill="#00f000"/>
<rect x="615.21" y="361.00" width="2.1" height="9.30" fill="#00f000"/>
<rect x="618.54" y="361.00" width="2.1" height="9.30" fill="#00f000"/>
<rect x="621.88" y="361.99" width="2.1" height="8.31" fill="#00f000"/>
<rect x="625.21" y="366.11" width="2.1" height="4.19" fill="#00f000"/>
<rect x="628.54" y="368.90" width="2.1" height="1.40" fill="#00f000"/>
<rect x="631.88" y="368.11" width="2.1" height="2.19" fill="#00f000"/>
<rect x="635.21" y="365.75" width="2.1" height="4.55" fill="#00f000"/>
</g>
<text x="80.31" y="331.8" font-size="3.94" fill="#dcdcdc" text-anchor="start" font-weight="normal" style="font-family:'Liberation Sans', sans-serif" stroke="#dcdcdc" stroke-width="0.1" transform="skewX(0.05)" >Ultimate Trend Following HistoBars 0.0000 0.0000</text>
<text x="782.01" y="330.4" font-size="3.9" fill="#eeeeee" text-anchor="start" font-weight="normal" style="font-family:'Liberation Sans', sans-serif" stroke="#eeeeee" stroke-width="0.05" transform="skewX(0.05)" >0.0004</text>
<text x="781.98" y="371.8" font-size="3.9" fill="#eeeeee" text-anchor="start" font-weight="normal" style="font-family:'Liberation Sans', sans-serif" stroke="#eeeeee" stroke-width="0.05" transform="skewX(0.05)" >0.00</text>
<text x="781.95" y="400.9" font-size="3.9" fill="#eeeeee" text-anchor="start" font-weight="normal" style="font-family:'Liberation Sans', sans-serif" stroke="#eeeeee" stroke-width="0.05" transform="skewX(0.05)" >-0.0003</text>
<rect x="79.25" y="402.6" width="0.5" height="1.6" fill="#ccc"/>
<text x="79.54" y="408" font-size="3.8" fill="#e0e0e0" text-anchor="start" font-weight="normal" style="font-family:'Liberation Sans', sans-serif" stroke="#e0e0e0" stroke-width="0.1" transform="skewX(0.05)" >29 Jul 2022</text>
<rect x="105.92" y="402.6" width="0.5" height="1.6" fill="#ccc"/>
<text x="106.21" y="408" font-size="3.8" fill="#e0e0e0" text-anchor="start" font-weight="normal" style="font-family:'Liberation Sans', sans-serif" stroke="#e0e0e0" stroke-width="0.1" transform="skewX(0.05)" >29 Jul 16:00</text>
<rect x="132.58" y="402.6" width="0.5" height="1.6" fill="#ccc"/>
<text x="132.88" y="408" font-size="3.8" fill="#e0e0e0" text-anchor="start" font-weight="normal" style="font-family:'Liberation Sans', sans-serif" stroke="#e0e0e0" stroke-width="0.1" transform="skewX(0.05)" >29 Jul 17:00</text>
<rect x="159.25" y="402.6" width="0.5" height="1.6" fill="#ccc"/>
<text x="159.54" y="408" font-size="3.8" fill="#e0e0e0" text-anchor="start" font-weight="normal" style="font-family:'Liberation Sans', sans-serif" stroke="#e0e0e0" stroke-width="0.1" transform="skewX(0.05)" >29 Jul 17:45</text>
<rect x="185.92" y="402.6" width="0.5" height="1.6" fill="#ccc"/>
<text x="186.21" y="408" font-size="3.8" fill="#e0e0e0" text-anchor="start" font-weight="normal" style="font-family:'Liberation Sans', sans-serif" stroke="#e0e0e0" stroke-width="0.1" transform="skewX(0.05)" >29 Jul 21:45</text>
<rect x="212.59" y="402.6" width="0.5" height="1.6" fill="#ccc"/>
<text x="212.88" y="408" font-size="3.8" fill="#e0e0e0" text-anchor="start" font-weight="normal" style="font-family:'Liberation Sans', sans-serif" stroke="#e0e0e0" stroke-width="0.1" transform="skewX(0.05)" >1 Aug 10:15</text>
<rect x="239.25" y="402.6" width="0.5" height="1.6" fill="#ccc"/>
<text x="239.55" y="408" font-size="3.8" fill="#e0e0e0" text-anchor="start" font-weight="normal" style="font-family:'Liberation Sans', sans-serif" stroke="#e0e0e0" stroke-width="0.1" transform="skewX(0.05)" >1 Aug 16:45</text>
<rect x="265.92" y="402.6" width="0.5" height="1.6" fill="#ccc"/>
<text x="266.21" y="408" font-size="3.8" fill="#e0e0e0" text-anchor="start" font-weight="normal" style="font-family:'Liberation Sans', sans-serif" stroke="#e0e0e0" stroke-width="0.1" transform="skewX(0.05)" >2 Aug 00:00</text>
<rect x="292.59" y="402.6" width="0.5" height="1.6" fill="#ccc"/>
<text x="292.88" y="408" font-size="3.8" fill="#e0e0e0" text-anchor="start" font-weight="normal" style="font-family:'Liberation Sans', sans-serif" stroke="#e0e0e0" stroke-width="0.1" transform="skewX(0.05)" >2 Aug 07:30</text>
<rect x="319.25" y="402.6" width="0.5" height="1.6" fill="#ccc"/>
<text x="319.55" y="408" font-size="3.8" fill="#e0e0e0" text-anchor="start" font-weight="normal" style="font-family:'Liberation Sans', sans-serif" stroke="#e0e0e0" stroke-width="0.1" transform="skewX(0.05)" >2 Aug 08:30</text>
<rect x="345.92" y="402.6" width="0.5" height="1.6" fill="#ccc"/>
<text x="346.21" y="408" font-size="3.8" fill="#e0e0e0" text-anchor="start" font-weight="normal" style="font-family:'Liberation Sans', sans-serif" stroke="#e0e0e0" stroke-width="0.1" transform="skewX(0.05)" >2 Aug 11:15</text>
<rect x="372.59" y="402.6" width="0.5" height="1.6" fill="#ccc"/>
<text x="372.88" y="408" font-size="3.8" fill="#e0e0e0" text-anchor="start" font-weight="normal" style="font-family:'Liberation Sans', sans-serif" stroke="#e0e0e0" stroke-width="0.1" transform="skewX(0.05)" >2 Aug 17:00</text>
<rect x="399.25" y="402.6" width="0.5" height="1.6" fill="#ccc"/>
<text x="399.55" y="408" font-size="3.8" fill="#e0e0e0" text-anchor="start" font-weight="normal" style="font-family:'Liberation Sans', sans-serif" stroke="#e0e0e0" stroke-width="0.1" transform="skewX(0.05)" >2 Aug 19:15</text>
<rect x="425.92" y="402.6" width="0.5" height="1.6" fill="#ccc"/>
<text x="426.21" y="408" font-size="3.8" fill="#e0e0e0" text-anchor="start" font-weight="normal" style="font-family:'Liberation Sans', sans-serif" stroke="#e0e0e0" stroke-width="0.1" transform="skewX(0.05)" >3 Aug 02:30</text>
<rect x="452.59" y="402.6" width="0.5" height="1.6" fill="#ccc"/>
<text x="452.88" y="408" font-size="3.8" fill="#e0e0e0" text-anchor="start" font-weight="normal" style="font-family:'Liberation Sans', sans-serif" stroke="#e0e0e0" stroke-width="0.1" transform="skewX(0.05)" >3 Aug 06:45</text>
<rect x="479.25" y="402.6" width="0.5" height="1.6" fill="#ccc"/>
<text x="479.55" y="408" font-size="3.8" fill="#e0e0e0" text-anchor="start" font-weight="normal" style="font-family:'Liberation Sans', sans-serif" stroke="#e0e0e0" stroke-width="0.1" transform="skewX(0.05)" >3 Aug 11:45</text>
<rect x="505.92" y="402.6" width="0.5" height="1.6" fill="#ccc"/>
<text x="506.22" y="408" font-size="3.8" fill="#e0e0e0" text-anchor="start" font-weight="normal" style="font-family:'Liberation Sans', sans-serif" stroke="#e0e0e0" stroke-width="0.1" transform="skewX(0.05)" >3 Aug 19:00</text>
<rect x="532.59" y="402.6" width="0.5" height="1.6" fill="#ccc"/>
<text x="532.88" y="408" font-size="3.8" fill="#e0e0e0" text-anchor="start" font-weight="normal" style="font-family:'Liberation Sans', sans-serif" stroke="#e0e0e0" stroke-width="0.1" transform="skewX(0.05)" >4 Aug 09:00</text>
<rect x="559.26" y="402.6" width="0.5" height="1.6" fill="#ccc"/>
<text x="559.55" y="408" font-size="3.8" fill="#e0e0e0" text-anchor="start" font-weight="normal" style="font-family:'Liberation Sans', sans-serif" stroke="#e0e0e0" stroke-width="0.1" transform="skewX(0.05)" >4 Aug 19:15</text>
<rect x="585.92" y="402.6" width="0.5" height="1.6" fill="#ccc"/>
<text x="586.22" y="408" font-size="3.8" fill="#e0e0e0" text-anchor="start" font-weight="normal" style="font-family:'Liberation Sans', sans-serif" stroke="#e0e0e0" stroke-width="0.1" transform="skewX(0.05)" >5 Aug 10:00</text>
<rect x="612.59" y="402.6" width="0.5" height="1.6" fill="#ccc"/>
<text x="612.88" y="408" font-size="3.8" fill="#e0e0e0" text-anchor="start" font-weight="normal" style="font-family:'Liberation Sans', sans-serif" stroke="#e0e0e0" stroke-width="0.1" transform="skewX(0.05)" >5 Aug 15:45</text>
<rect x="77" y="410.7" width="723" height="8.5" fill="#f0f0f0"/>
<text x="84.14" y="417.6" font-size="5.1" fill="#a8a8a8" text-anchor="start" font-weight="normal" style="font-family:'Liberation Sans', sans-serif" stroke="#a8a8a8" stroke-width="0.07" transform="skewX(0.05)" >AUDCAD,M15</text>
<path d="M119.6 410.6 v8.8 h56.8 v-8.8" fill="#ffffff" stroke="#6a6a6a" stroke-width="0.5"/>
<text x="123.64" y="417.6" font-size="5.1" fill="#1a1a1a" text-anchor="start" font-weight="normal" style="font-family:'Liberation Sans', sans-serif" stroke="#1a1a1a" stroke-width="0.07" transform="skewX(0.05)" >AUDCAD,M3 (offline)</text>
<path d="M787.4 413.8 l-1.3 1.5 l1.3 1.5 M794.2 413.8 l1.3 1.5 l-1.3 1.5" fill="none" stroke="#9a9a9a" stroke-width="0.5"/>
<rect x="0" y="419.2" width="800" height="9.6" fill="#f0f0f0"/>
<rect x="0" y="419.2" width="800" height="0.5" fill="#e2e2e2"/>
<text x="0.53" y="427.3" font-size="4.75" fill="#111" text-anchor="start" font-weight="normal" style="font-family:'Liberation Sans', sans-serif" stroke="#111" stroke-width="0.1" transform="skewX(0.05)" >For Help, press F1</text>
<rect x="510" y="420.6" width="0.45" height="7.2" fill="#c8c8c8"/>
<rect x="559" y="420.6" width="0.45" height="7.2" fill="#c8c8c8"/>
<rect x="600" y="420.6" width="0.45" height="7.2" fill="#c8c8c8"/>
<rect x="631.9" y="420.6" width="0.45" height="7.2" fill="#c8c8c8"/>
<rect x="661" y="420.6" width="0.45" height="7.2" fill="#c8c8c8"/>
<rect x="687.5" y="420.6" width="0.45" height="7.2" fill="#c8c8c8"/>
<rect x="717" y="420.6" width="0.45" height="7.2" fill="#c8c8c8"/>
<rect x="743.8" y="420.6" width="0.45" height="7.2" fill="#c8c8c8"/>
<text x="512.13" y="426.8" font-size="4.3" fill="#111" text-anchor="start" font-weight="normal" style="font-family:'Liberation Sans', sans-serif" stroke="#111" stroke-width="0.12" transform="skewX(0.05)" >Default</text>
<text x="561.53" y="426.8" font-size="4.3" fill="#111" text-anchor="start" font-weight="normal" style="font-family:'Liberation Sans', sans-serif" stroke="#111" stroke-width="0.12" transform="skewX(0.05)" >2022.08.03 13:15</text>
<text x="604.33" y="426.8" font-size="4.3" fill="#111" text-anchor="start" font-weight="normal" style="font-family:'Liberation Sans', sans-serif" stroke="#111" stroke-width="0.12" transform="skewX(0.05)" >O: 0.89076</text>
<text x="633.43" y="426.8" font-size="4.3" fill="#111" text-anchor="start" font-weight="normal" style="font-family:'Liberation Sans', sans-serif" stroke="#111" stroke-width="0.12" transform="skewX(0.05)" >H: 0.89176</text>
<text x="662.63" y="426.8" font-size="4.3" fill="#111" text-anchor="start" font-weight="normal" style="font-family:'Liberation Sans', sans-serif" stroke="#111" stroke-width="0.12" transform="skewX(0.05)" >L: 0.89011</text>
<text x="691.63" y="426.8" font-size="4.3" fill="#111" text-anchor="start" font-weight="normal" style="font-family:'Liberation Sans', sans-serif" stroke="#111" stroke-width="0.12" transform="skewX(0.05)" >C: 0.89176</text>
<text x="720.63" y="426.8" font-size="4.3" fill="#111" text-anchor="start" font-weight="normal" style="font-family:'Liberation Sans', sans-serif" stroke="#111" stroke-width="0.12" transform="skewX(0.05)" >V: 3438</text>
<text x="759.63" y="426.8" font-size="4.3" fill="#111" text-anchor="start" font-weight="normal" style="font-family:'Liberation Sans', sans-serif" stroke="#111" stroke-width="0.12" transform="skewX(0.05)" >136/1 kb</text>
<rect x="747.8" y="422.4" width="10" height="4" fill="#4a90c0"/><path d="M747.8 426.4 L757.8 422.4 V426.4 Z" fill="#6ab04a"/>
<defs><linearGradient id="tbg" x1="0" x2="1" y1="0" y2="0"><stop offset="0" stop-color="#dfe8f3"/><stop offset="0.5" stop-color="#e6edf6"/><stop offset="1" stop-color="#e4ebf5"/></linearGradient></defs>
<rect x="0" y="429.6" width="800" height="20.4" fill="url(#tbg)"/>
<rect x="0" y="429.6" width="800" height="0.4" fill="#d6dde6"/>
<rect x="6.4" y="435.4" width="10.4" height="9.2" rx="1.2" fill="#1f7ad6"/><rect x="8" y="436.8" width="3.4" height="6.4" rx="0.4" fill="#ffffff"/><rect x="12.4" y="436.8" width="3" height="6.4" rx="0.4" fill="#8cc8f8"/>
<rect x="340" y="435.4" width="4.9" height="4.7" fill="#1a86e0"/><rect x="345.4" y="435.4" width="4.9" height="4.7" fill="#2a9ef0"/><rect x="340" y="440.5" width="4.9" height="4.7" fill="#0f74d0"/><rect x="345.4" y="440.5" width="4.9" height="4.7" fill="#1a8ae4"/>
<circle cx="364.4" cy="439" r="2.9" fill="none" stroke="#1a1a1a" stroke-width="0.9"/><path d="M362.2 441.3 l-2.6 2.8" stroke="#1a1a1a" stroke-width="1.1"/>
<rect x="376.8" y="439" width="6" height="5.6" fill="#222"/><rect x="379.6" y="437" width="5.8" height="5.4" fill="#d0d0d0" stroke="#999" stroke-width="0.3"/><rect x="376.8" y="439.8" width="5.2" height="4.8" fill="#1a1a1a"/>
<circle cx="400" cy="440.2" r="4.6" fill="#7a64d8"/><path d="M396 443 l-1 2.4 l2.6 -1.2 z" fill="#7a64d8"/><rect x="397.6" y="438.4" width="3.6" height="3.4" rx="0.6" fill="#fff"/><path d="M401.2 439.6 l1.6 -1 v3 l-1.6 -1 z" fill="#fff"/>
<circle cx="419.2" cy="440" r="5" fill="#1c8ae0"/><path d="M414.8 441.5 a4.8 4.8 0 0 0 8.8 1.5 c-2 1 -5 0.5 -5.5 -2 c-0.2 -1.5 1 -2.5 2.5 -2.5 c2 0 4 1 4.2 2.5 c0.8 -3.5 -2.5 -5.6 -5 -5.6" fill="#3ec27a"/><circle cx="419" cy="440.5" r="1.6" fill="#1c8ae0"/>
<circle cx="419.2" cy="447.6" r="0.5" fill="#777"/>
<path d="M431.8 436.6 h3.8 l1 1.2 h5.6 v7.2 h-10.4 z" fill="#f6c233"/><rect x="431.8" y="441.6" width="10.4" height="3.4" fill="#1f78cf"/><rect x="431.8" y="438.6" width="10.4" height="3" fill="#fcd85a"/>
<rect x="447.2" y="430.4" width="15.4" height="18.4" rx="1.5" fill="#f3f6fa"/>
<circle cx="454.6" cy="440" r="4.7" fill="#1aa64a"/><path d="M454.6 435.8 l3.6 4.2 l-3.6 4.2 z" fill="#1aa64a"/><rect x="453.6" y="437.4" width="2.1" height="5.2" rx="1" fill="#fff"/>
<rect x="451.4" y="447.2" width="7.2" height="0.9" rx="0.45" fill="#1a6fd0"/>
<path d="M716.8 440.8 l2 -2 l2 2" fill="none" stroke="#222" stroke-width="0.6"/>
<path d="M727.6 438.6 a4.4 4.4 0 0 1 6 0 M728.6 439.8 a2.9 2.9 0 0 1 4 0" fill="none" stroke="#222" stroke-width="0.6"/><path d="M729.6 441 l1 1.2 l1 -1.2 a1.5 1.5 0 0 0 -2 0 z" fill="#222"/>
<path d="M738 438.8 h1.2 l1.6 -1.4 v5.6 l-1.6 -1.4 h-1.2 z" fill="#222"/><path d="M742 438.4 a2.2 2.2 0 0 1 0 3.6 M743 437.4 a3.6 3.6 0 0 1 0 5.6" fill="none" stroke="#222" stroke-width="0.45"/>
<rect x="748" y="438.2" width="5.8" height="3.6" fill="none" stroke="#222" stroke-width="0.5"/><rect x="748.6" y="438.8" width="3.8" height="2.4" fill="#222"/><rect x="753.9" y="439.3" width="0.6" height="1.4" fill="#222"/>
<text x="773.02" y="438.4" font-size="4.3" fill="#1a1a1a" text-anchor="middle" font-weight="normal" style="font-family:'Liberation Sans', sans-serif" stroke="#1a1a1a" stroke-width="0.1" transform="skewX(0.05)" >2:40 PM</text>
<text x="772.01" y="444.6" font-size="4.9" fill="#1a1a1a" text-anchor="middle" font-weight="normal" style="font-family:'Liberation Sans', sans-serif" stroke="#1a1a1a" stroke-width="0.1" transform="skewX(0.05)" >8/5/2022</text>
<path d="M790.5 437 a3.2 3.2 0 1 0 2.6 4.6 a3 3 0 0 1 -2.6 -4.6 z" fill="none" stroke="#222" stroke-width="0.5"/>
</svg>
</body></html>
